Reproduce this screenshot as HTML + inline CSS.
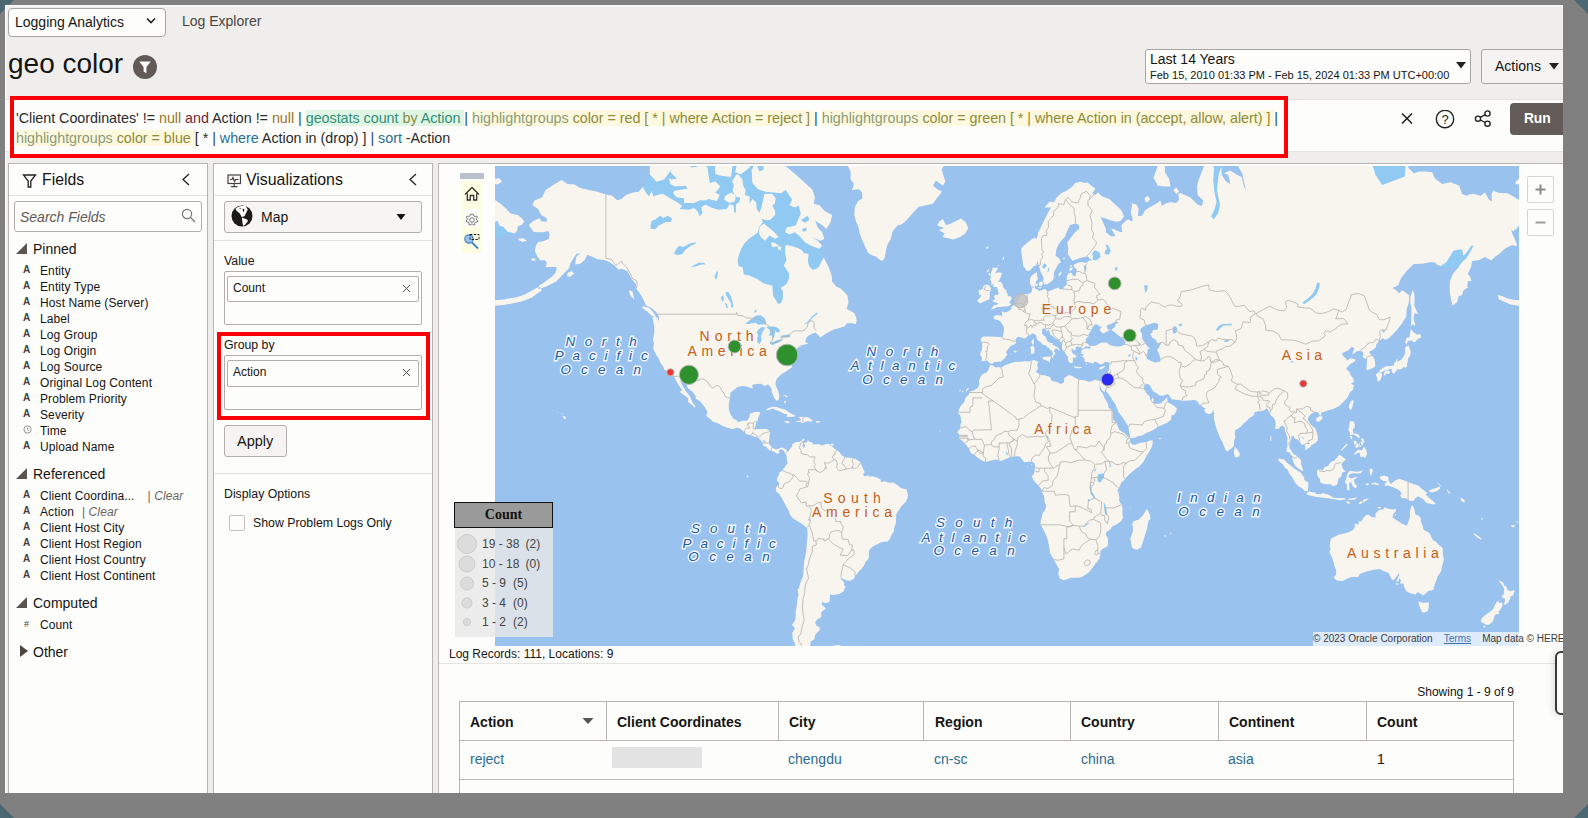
<!DOCTYPE html>
<html><head><meta charset="utf-8">
<style>
*{box-sizing:border-box;margin:0;padding:0}
html,body{width:1588px;height:818px;overflow:hidden;background:#808080;font-family:"Liberation Sans",sans-serif;color:#161513}
.abs{position:absolute}
#frame{position:absolute;left:5px;top:5px;width:1558px;height:788px;background:#efeeec;overflow:hidden;box-shadow:inset 1.5px 1.5px 0 #f9f9f7}
.corner{position:absolute;width:0;height:0}
.panel{position:absolute;background:#fdfdfb;border:1px solid #b9b4b0}
.hsep{position:absolute;height:1px;background:#e3e1de}
.box{position:absolute;border:1px solid #b3aeaa;border-radius:3px;background:#fdfdfb}
.t12{position:absolute;font-size:12px;line-height:14px;white-space:nowrap;color:#161513}
.fi{position:absolute;left:32px;font-size:12px;line-height:14px;white-space:nowrap;color:#161513;letter-spacing:0.1px}
.fa{position:absolute;left:15px;font-size:10px;line-height:14px;font-weight:bold;color:#47423e}
.sec{position:absolute;left:25px;font-size:14px;line-height:16px;color:#161513;white-space:nowrap}
.tri{position:absolute;left:8px;width:0;height:0;border-left:11px solid transparent;border-bottom:11px solid #5a544f}
.clr{font-style:italic;color:#6b6661}
.q{position:absolute;left:11px;font-size:14.33px;line-height:18px;white-space:nowrap;color:#2b2b2b;letter-spacing:-0.03px}
.q .n{color:#9a7428}.q .a{color:#7a1f33}.q .p{color:#26497a}.q .g{color:#2f8f78}.q .o{color:#8f8a3c}.q .h{color:#8d9b78}.q .w{color:#2a6f94}
.q .bg1{background:#e0f6e4}.q .bg2{background:#fcf9df}
th,td{font-size:14px}
</style></head><body>
<!-- teal corners -->
<svg class="abs" style="left:0;top:0" width="1588" height="818">
<polygon points="0,0 14,0 0,14" fill="#4b6772"/>
<polygon points="1574,0 1588,0 1588,14" fill="#4b6772"/>
<polygon points="0,804 14,818 0,818" fill="#4b6772"/>
<polygon points="1574,818 1588,804 1588,818" fill="#4b6772"/>
</svg>
<div id="frame">
<!-- top bar -->
<div class="box" style="left:3px;top:2.5px;width:158px;height:29px;border-radius:4px;border-color:#aaa5a0"></div>
<div class="abs" style="left:10px;top:8px;font-size:14px;line-height:18px;color:#161513">Logging Analytics</div>
<svg class="abs" style="left:141px;top:12px" width="10" height="8"><path d="M1 1.5 L5 5.5 L9 1.5" fill="none" stroke="#222" stroke-width="1.6"/></svg>
<div class="abs" style="left:177px;top:7px;font-size:14px;line-height:18px;color:#4a4541">Log Explorer</div>
<div class="abs" style="left:3px;top:42px;font-size:28px;line-height:34px;color:#161513">geo color</div>
<svg class="abs" style="left:127px;top:49px" width="26" height="26"><circle cx="13" cy="13" r="12" fill="#615a56"/><path d="M7.2 7.5 H18.8 L14.4 13 V19.3 L11.6 17.6 V13 Z" fill="#fff"/></svg>

<!-- time picker -->
<div class="box" style="left:1140px;top:44px;width:326px;height:35px;border-color:#aaa5a0"></div>
<div class="abs" style="left:1145px;top:46px;font-size:14px;line-height:16px;color:#161513">Last 14 Years</div>
<div class="abs" style="left:1145px;top:63px;font-size:11px;line-height:14px;color:#161513;white-space:nowrap">Feb 15, 2010 01:33 PM - Feb 15, 2024 01:33 PM UTC+00:00</div>
<svg class="abs" style="left:1451px;top:57px" width="10" height="7"><polygon points="0,0 10,0 5,6.5" fill="#222"/></svg>
<div class="box" style="left:1476px;top:44px;width:100px;height:35px;background:#f4f3f1;border-color:#aaa5a0"></div>
<div class="abs" style="left:1490px;top:52px;font-size:14px;line-height:18px;color:#161513">Actions</div>
<svg class="abs" style="left:1544px;top:58px" width="10" height="7"><polygon points="0,0 10,0 5,6.5" fill="#222"/></svg>

<!-- query bar -->
<div class="abs" style="left:0;top:94px;width:1558px;height:53px;background:#fdfdfb;border-top:1px solid #e4e2df;border-bottom:1px solid #e4e2df"></div>
<div class="abs" style="left:5px;top:91px;width:1278px;height:62px;border:4px solid #fb0007;background:#fdfdfb"></div>
<div class="q" style="top:104px">'Client Coordinates' != <span class="n">null</span> <span class="a">and</span> Action != <span class="n">null</span> <span class="p">|</span> <span class="bg1"><span class="g">geostats count</span> <span class="o">by</span> <span class="g">Action</span> </span><span class="p">|</span> <span class="bg2"><span class="h">highlightgroups</span> <span class="o">color = red [ * | where Action = reject ]</span> </span><span class="p">|</span> <span class="bg2"><span class="h">highlightgroups</span> <span class="o">color = green [ * | where Action in (accept, allow, alert) ]</span> </span><span class="p">|</span></div>
<div class="q" style="top:124px"><span class="bg2"><span class="h">highlightgroups</span> <span class="o">color = blue</span> </span>[ * <span class="p">|</span> <span class="w">where</span> Action in (drop) ] <span class="p">|</span> <span class="w">sort</span> -Action</div>
<svg class="abs" style="left:1394px;top:105px" width="100" height="20">
<path d="M3 3.5 L13 13.5 M13 3.5 L3 13.5" stroke="#222" stroke-width="1.6" fill="none"/>
<circle cx="46" cy="9" r="8.7" fill="none" stroke="#222" stroke-width="1.4"/>
<text x="46" y="13.6" font-size="13" text-anchor="middle" font-family="Liberation Sans" fill="#222">?</text>
<g fill="none" stroke="#222" stroke-width="1.4"><circle cx="79" cy="8.7" r="2.6"/><circle cx="88.5" cy="3.5" r="2.6"/><circle cx="88.5" cy="13.7" r="2.6"/><path d="M81.3 7.4 L86.2 4.7 M81.3 10 L86.2 12.5"/></g>
</svg>
<div class="abs" style="left:1505px;top:98px;width:70px;height:32px;background:#625b57;border-radius:4px"></div>
<div class="abs" style="left:1519px;top:105px;font-size:13.8px;line-height:18px;color:#fff;font-weight:bold;letter-spacing:-0.1px">Run</div>

<!-- between strip -->


<!-- FIELDS panel -->
<div class="panel" style="left:3px;top:158px;width:200px;height:640px"></div>
<div id="fields" class="abs" style="left:3px;top:158px;width:200px;height:640px">
<svg class="abs" style="left:14px;top:10px" width="16" height="16"><path d="M1.5 2 H13.5 L8.8 8 V14 L6.2 14 V8 Z" fill="none" stroke="#222" stroke-width="1.3" stroke-linejoin="miter"/></svg>
<div class="abs" style="left:34px;top:7px;font-size:15.8px;line-height:20px">Fields</div>
<svg class="abs" style="left:173px;top:10px" width="10" height="14"><path d="M8 1 L2 6.5 L8 12" fill="none" stroke="#222" stroke-width="1.3"/></svg>
<div class="hsep" style="left:1px;top:32px;width:198px"></div>
<div class="box" style="left:6px;top:38px;width:188px;height:31px"></div>
<div class="abs" style="left:12px;top:45px;font-size:14px;line-height:18px;font-style:italic;color:#5f5a56">Search Fields</div>
<svg class="abs" style="left:173px;top:45px" width="16" height="16"><circle cx="6" cy="6" r="4.6" fill="none" stroke="#777" stroke-width="1.2"/><path d="M9.4 9.4 L14 14" stroke="#777" stroke-width="1.3"/></svg>

<div class="tri" style="top:80px"></div><div class="sec" style="top:78px">Pinned</div>
<div class="fa" style="top:100px">A</div><div class="fi" style="top:101px">Entity</div>
<div class="fa" style="top:116px">A</div><div class="fi" style="top:117px">Entity Type</div>
<div class="fa" style="top:132px">A</div><div class="fi" style="top:133px">Host Name (Server)</div>
<div class="fa" style="top:148px">A</div><div class="fi" style="top:149px">Label</div>
<div class="fa" style="top:164px">A</div><div class="fi" style="top:165px">Log Group</div>
<div class="fa" style="top:180px">A</div><div class="fi" style="top:181px">Log Origin</div>
<div class="fa" style="top:196px">A</div><div class="fi" style="top:197px">Log Source</div>
<div class="fa" style="top:212px">A</div><div class="fi" style="top:213px">Original Log Content</div>
<div class="fa" style="top:228px">A</div><div class="fi" style="top:229px">Problem Priority</div>
<div class="fa" style="top:244px">A</div><div class="fi" style="top:245px">Severity</div>
<svg class="abs" style="left:15px;top:262px" width="9" height="9"><circle cx="4.5" cy="4.5" r="3.6" fill="none" stroke="#8a8581" stroke-width="0.9"/><path d="M4.5 2.5 V4.7 L5.8 5.6" fill="none" stroke="#8a8581" stroke-width="0.8"/></svg><div class="fi" style="top:261px">Time</div>
<div class="fa" style="top:276px">A</div><div class="fi" style="top:277px">Upload Name</div>

<div class="tri" style="top:305px"></div><div class="sec" style="top:303px">Referenced</div>
<div class="fa" style="top:325px">A</div><div class="fi" style="top:326px">Client Coordina...<span class="clr" style="margin-left:13px"><span style="font-style:normal">|</span> Clear</span></div>
<div class="fa" style="top:341px">A</div><div class="fi" style="top:342px">Action<span class="clr" style="margin-left:8px"><span style="font-style:normal">|</span> Clear</span></div>
<div class="fa" style="top:357px">A</div><div class="fi" style="top:358px">Client Host City</div>
<div class="fa" style="top:373px">A</div><div class="fi" style="top:374px">Client Host Region</div>
<div class="fa" style="top:389px">A</div><div class="fi" style="top:390px">Client Host Country</div>
<div class="fa" style="top:405px">A</div><div class="fi" style="top:406px">Client Host Continent</div>

<div class="tri" style="top:434px"></div><div class="sec" style="top:432px">Computed</div>
<div class="fa" style="top:454px;font-weight:normal;font-size:9px;left:16px">#</div><div class="fi" style="top:455px">Count</div>
<div class="abs" style="left:12px;top:482px;width:0;height:0;border-top:6.5px solid transparent;border-bottom:6.5px solid transparent;border-left:8px solid #4a4541"></div><div class="sec" style="top:481px">Other</div>
</div>

<!-- VISUALIZATIONS panel -->
<div class="panel" style="left:208px;top:158px;width:220px;height:640px"></div>
<div id="viz" class="abs" style="left:208px;top:158px;width:220px;height:640px">
<svg class="abs" style="left:14px;top:11px" width="16" height="15" fill="none" stroke="#47423e" stroke-width="1.2"><rect x="1" y="1" width="12.5" height="8.5"/><path d="M3 5.5 H5 L6 3.5 L7.5 7.5 L8.5 5.5 H11.5 M7.2 9.5 V12.5 M4 12.7 H10.5"/></svg>
<div class="abs" style="left:33px;top:7px;font-size:15.9px;line-height:20px">Visualizations</div>
<svg class="abs" style="left:195px;top:10px" width="10" height="14"><path d="M8 1 L2 6.5 L8 12" fill="none" stroke="#222" stroke-width="1.3"/></svg>
<div class="hsep" style="left:1px;top:32px;width:218px"></div>
<div class="box" style="left:11px;top:38px;width:198px;height:32px;background:#f6f5f3"></div>
<svg class="abs" style="left:17.5px;top:42.4px" width="22" height="22"><circle cx="11" cy="11" r="10.5" fill="#1b1a18"/><path d="M6.4 2.3 L10 1 L14.6 1.1 L16.8 4.6 L15 8.3 L13.4 11.3 L10.7 11.9 L8.8 8.6 L5.8 6 L4.3 4.1 Z" fill="#fdfdfb"/><path d="M11.6 3.6 L13.3 4.2 L13 6.9 L11.9 6.2 Z M8.5 3 L10 3.5 L9.2 4.6Z" fill="#1b1a18"/><path d="M10.9 12.4 L16.1 14.4 L17 16.1 L14.1 19.7 L12.2 21 L11.4 17.6 Z" fill="#fdfdfb"/></svg>
<div class="abs" style="left:48px;top:45px;font-size:14px;line-height:18px;color:#161513">Map</div>
<svg class="abs" style="left:182.5px;top:51px" width="10" height="7"><polygon points="0.5,0 9.5,0 5,6" fill="#111"/></svg>
<div class="hsep" style="left:1px;top:77px;width:218px"></div>
<div class="t12" style="left:11px;top:91px;font-size:12.3px">Value</div>
<div class="box" style="left:11px;top:108px;width:198px;height:54px;border-radius:2px"></div>
<div class="box" style="left:14px;top:113px;width:192px;height:26px;border-radius:2px"></div>
<div class="t12" style="left:20px;top:118px">Count</div>
<svg class="abs" style="left:189px;top:121px" width="9" height="9"><path d="M1 1 L8 8 M8 1 L1 8" stroke="#444" stroke-width="0.95"/></svg>

<div class="abs" style="left:4px;top:169px;width:213px;height:88px;border:4px solid #fb0007"></div>
<div class="t12" style="left:11px;top:175px;font-size:12.3px">Group by</div>
<div class="box" style="left:11px;top:192px;width:198px;height:55px;border-radius:2px"></div>
<div class="box" style="left:14px;top:197px;width:192px;height:27px;border-radius:2px"></div>
<div class="t12" style="left:20px;top:202px">Action</div>
<svg class="abs" style="left:189px;top:205px" width="9" height="9"><path d="M1 1 L8 8 M8 1 L1 8" stroke="#444" stroke-width="0.95"/></svg>

<div class="box" style="left:11px;top:262px;width:63px;height:32px;background:#f5f4f2;border-radius:3px"></div>
<div class="abs" style="left:24px;top:269px;font-size:14.5px;line-height:18px">Apply</div>
<div class="hsep" style="left:1px;top:310px;width:218px"></div>
<div class="t12" style="left:11px;top:324px;font-size:12.3px">Display Options</div>
<div class="box" style="left:16px;top:352px;width:16px;height:16px;border-radius:2px;border-color:#c4c0bc"></div>
<div class="t12" style="left:40px;top:353px;font-size:12.3px">Show Problem Logs Only</div>
</div>

<!-- MAP panel -->
<div class="panel" style="left:433px;top:158px;width:1140px;height:640px"></div>
<div id="mapwrap" class="abs" style="left:490px;top:161px;width:1024px;height:480px;background:#99c2ee;overflow:hidden">
<!--MAPSVG--><svg class="abs" style="left:0;top:0" width="1024" height="480" viewBox="0 0 1024 480">
<path fill="#90c9f2" d="M147.9 21 L154.7 8.2 L155 -3.2 L157.9 -27.5 L284.4 -27.5 L284.4 -6.2 L298.7 12.7 L310 29.8 L318.6 49 L315.7 63 L321.4 79.1 L325.4 81.5 L328.8 91.6 L324.3 110.2 L307.2 125.3 L293 139.3 L281.6 141.6 L274.5 132.4 L261.7 122.9 L241.8 110.2 L236.1 93.9 L236.1 72.8 L250.3 59.6 L250.3 49 L227.6 50.4 L207.6 54 L190.6 47.5 L176.4 39.3 L162.1 35.4 L150.8 31.4 L146.5 24 Z M715.4 0.2 L727.9 0.2 L727.9 56.1 L715.4 56.1 Z M0 56.1 L17.6 56.1 L17.6 67.6 L0 72.2 Z M944.5 101.3 L949.7 86.8 L961.8 79.1 L982.7 78.1 L982.7 90.9 L972.3 101.3 Z"/>
<path fill="#f8f4ee" d="M33.8 58.9 L38.4 54.7 L44.7 52.2 L46.4 55.4 L52.1 55.4 L51.5 51.9 L46.1 49 L43.8 43.8 L37.5 38.9 L39.3 34.6 L46.9 31.4 L50.6 24 L58.3 18.9 L66.6 14.1 L72.5 18 L79.6 18.5 L85.3 21.9 L93.9 24 L102.4 25.7 L110.9 28.6 L116.6 29.4 L122.3 34.2 L126.6 33 L130.8 29 L138 26.5 L143.6 25.7 L147.9 21 L150.8 26.5 L154.2 30.6 L156.7 24.8 L158.4 30.6 L162.1 29 L167.8 27.7 L176.4 33 L183.5 36.9 L187.2 40 L184.6 43.1 L193.4 43.8 L199.1 41.9 L202.5 45.3 L204.8 50.4 L207.6 46.8 L206.2 41.6 L210.5 38.5 L216.2 41.6 L223.3 43.8 L231.8 43.1 L234.7 37.7 L238.9 40 L238.9 46.1 L240.9 46.8 L240.9 38.5 L244.6 35.4 L245.2 31.4 L240.4 30.6 L237.5 24.8 L238.9 19.7 L237.2 15.4 L240.9 9.1 L243.2 8.2 L247.5 13.6 L248 18.9 L250.9 24.8 L249.7 29 L254.6 30.6 L254.6 37.7 L257.4 33 L261.1 36.2 L261.7 43.1 L264.5 46.8 L266.2 42.3 L268.2 33.8 L269.4 27.7 L277.3 28.1 L280.7 32.2 L279.9 37.7 L277.3 39.3 L280.2 45.3 L280.2 49 L274.8 54 L270.2 54 L266.5 52.6 L267.9 56.1 L264 61 L263.1 66.3 L258.8 69.6 L254 72.8 L249.5 77.2 L246 83.3 L243.8 89.3 L242.6 93.9 L243.8 100.6 L247.5 101.1 L248.9 108.6 L253.7 109.2 L261.7 112.8 L268.8 117.4 L277.3 119.4 L278.2 130.1 L280.7 133.8 L283 138 L285.9 137 L287.9 132.4 L287.9 125.3 L285.6 121.9 L291.6 117.9 L293.8 112.8 L294.1 107.6 L290.7 102.2 L288.7 99.5 L291.6 93.9 L290.1 88.1 L290.1 80.3 L291.8 78.8 L297.2 80.3 L302.9 82.1 L307.2 84.5 L308.6 86.9 L313.7 88.1 L312.9 95 L314.3 100.6 L317.7 103.8 L321.4 102.8 L324.3 100.6 L325.7 96.7 L328.8 91.6 L331.4 96.7 L334.2 102.2 L336.8 110.2 L337.1 115.4 L341.3 120.4 L345.6 122.4 L348.4 125.3 L352.4 129.6 L353.6 136.1 L351.6 142.9 L354.1 144.2 L359.3 146.9 L361.2 151.2 L361.8 155 L360.4 158.3 L357 157.1 L351.6 157.5 L349.6 160.4 L344.2 162 L338.8 163.6 L331.1 167.5 L325.1 171.4 L323.4 169.2 L321.1 167.3 L320.9 166.5 L317.2 167.7 L312.9 170 L310.9 172.8 L311.2 174.3 L310 175.5 L311.2 177 L312.9 176.4 L312.9 177.8 L309.5 178.5 L305.8 179.5 L302.6 180.6 L307.2 180.2 L301.8 181.9 L301.5 184.2 L300.1 186.8 L299 188.2 L297.2 186.4 L298.4 188.9 L298.1 191.5 L296.1 194.5 L295.3 190.8 L294.7 186.8 L294.4 191.5 L295 195.1 L295.8 195.4 L297.2 201.1 L294.4 203.1 L290.4 205.9 L287.3 207.6 L284.4 210.3 L281.6 213 L280.5 217 L280.7 219.6 L282.7 223.9 L284.3 229.3 L284 232.8 L283 234.4 L281.3 234.5 L279.3 231.9 L278.2 229.3 L276.5 226.1 L276.8 222.9 L274.5 220 L273.1 218.6 L269.4 220 L266 217.7 L261.7 218 L257.7 218.6 L257.1 220.3 L258.3 222.2 L255.4 221.9 L251.7 220.6 L247.5 220 L242.6 220.9 L238.9 223.9 L235.5 226.4 L235 231.9 L233.8 238.1 L233.8 243.4 L235.2 247.4 L238.1 252.5 L241.8 254.6 L243.5 256 L248.9 254.6 L251.7 254.9 L254 251.9 L254.6 250.9 L254.9 247.4 L260.3 245.9 L264.5 245.9 L265.1 247.4 L263.1 251.9 L262.5 255.5 L261.1 254.9 L261.1 257.9 L260 261.5 L259.1 262.7 L261.7 263.3 L267.4 263 L271.6 263 L275.3 265.3 L274.5 269.7 L274.2 274.1 L273.6 277 L275.9 279.9 L278.2 282.5 L281.6 283.4 L284.7 281.9 L287.3 281.4 L291.6 283.7 L292.1 284.2 L293.5 286 L291.8 287.7 L290.4 288 L289.6 286.8 L289 284.8 L285.9 283.1 L283.6 284.8 L284.4 287.1 L281.6 287.7 L279.6 285.7 L276.2 285.1 L274.2 284.2 L271.1 280.8 L267.9 279.9 L268.2 277.3 L266 274.7 L263.1 271.5 L259.4 270.6 L256 269.2 L251.7 268.3 L249.5 266.5 L245.2 262.4 L242.3 261.8 L241.2 261.9 L237.5 263.3 L231.8 261.5 L227.8 260 L222.7 257.3 L217.6 255.5 L215.3 253.1 L211.9 250.4 L211.3 249.2 L212.5 245.9 L209.4 240.6 L204.8 235 L200.8 232.8 L200.5 229.6 L197.4 225.8 L192.9 222.2 L190.6 215.7 L185.5 213 L185.7 215.7 L187.7 220 L191.1 225.5 L194.8 230.3 L197.1 235.6 L198.3 237.5 L200.7 240.6 L199.4 241.6 L198.3 239.7 L193.4 236.3 L192.9 231.9 L189.2 229.3 L185.5 226.4 L184.6 226 L187.2 223.9 L183.5 219 L180.3 213 L178.9 210.7 L178.3 209 L175.2 206.2 L172.9 204.9 L169.2 203.8 L168.7 201.4 L165.3 196.5 L163.6 192.2 L162.1 190.4 L159.9 186 L158.2 182.7 L159 177.4 L157.9 173.5 L159.3 166.9 L159.3 160 L157.3 150.8 L162.1 151.6 L163.8 155 L164.1 151.2 L162.7 148.2 L160.7 145.5 L156.4 142 L150.8 139.3 L148.5 133.8 L145.1 127.7 L141.4 122.9 L140.8 117.9 L136.5 112.8 L132.3 104.9 L126.6 102.8 L123.7 103.8 L119.5 99.5 L114.3 96.1 L109.5 93.9 L102.4 93.3 L96.7 90.4 L92.4 88.7 L89.6 93.9 L85.3 97.8 L80.2 98.4 L81.1 91 L85.3 86.9 L81.1 88.1 L78.2 92.7 L75.4 97.3 L74 102.2 L69.7 106.5 L65.4 111.3 L61.2 115.4 L55.5 118.4 L51.2 120.4 L46.9 121.9 L43.2 122.9 L44.1 119.4 L48.4 116.9 L52.6 113.8 L56.9 110.7 L60.3 107.1 L61.7 103.3 L61.2 101.1 L56.9 101.1 L51.8 101.1 L50.6 101.7 L51.8 96.7 L49.8 93.9 L45.5 94.4 L42.7 91 L39.8 85.1 L41.2 79.1 L43.2 76 L48.4 75.3 L54 72.8 L54.6 68.3 L53.2 65 L48.4 66.3 L41.5 66.3 L38.4 65.7 L33.8 58.9 Z M290.4 288 L292.1 284.2 L293.5 285.7 L295 282.8 L297 281.1 L297.2 278.5 L299.2 277 L300.9 276.1 L304.4 275.9 L306.6 274.4 L308.2 272.8 L309.5 273.2 L309.2 274.7 L307.5 276.4 L308.3 277.3 L307.2 279.9 L308.9 281.9 L310 279.9 L308.9 277.3 L312.3 275.9 L312.9 273.5 L313.7 275.6 L317.2 276.4 L318 278.2 L321.4 278.2 L324.3 278.2 L327.1 279.6 L329.1 278.8 L332.8 277.9 L335.9 277.9 L334.2 279.3 L337.1 280.5 L339.1 282.2 L341.3 284.2 L344.2 285.7 L346.5 289.1 L349.9 291.4 L355 291.7 L358.4 292.3 L362.7 294.3 L365.2 296.3 L366.9 300 L368.4 303.4 L369.8 306.2 L368.1 308.2 L368.9 310.2 L374 309.4 L374.6 311.1 L376.9 310.2 L381.2 311.3 L385.4 313.3 L386 316.2 L389.7 315.3 L394 316.8 L398.2 316.5 L402.5 319 L405.9 321.9 L409.6 323 L411.6 323.3 L412.4 327 L413 328.7 L412.7 331.6 L411 335.6 L408.2 338.5 L406.5 340 L403.9 344.3 L402.5 345.8 L401.1 348.7 L401.1 353.1 L400.8 357.6 L399.1 362.1 L398.8 365.4 L397.4 367.5 L395.4 371.1 L395.4 372.7 L392.5 375.6 L389.1 375.8 L385.4 376.4 L382.6 378.2 L380.3 378.9 L376 382 L374 384.5 L373.8 388.3 L374 390.2 L373.2 393.5 L370.6 395.7 L368.9 399.7 L366.4 403 L363.8 405.3 L360.1 410.4 L358.4 413.2 L355.6 414.7 L352.1 414.5 L347.6 412.8 L345.9 411.4 L345.6 412.8 L349.3 416.6 L349 419.4 L350.7 420.2 L348.4 425.5 L344.2 428.1 L338.5 429.1 L335.1 428.4 L334.8 432.8 L334.8 435.8 L330.5 437.3 L327.1 435.8 L326.8 438.5 L330 441.5 L331.1 442.7 L328.5 444.2 L326.3 446.2 L326.3 451.3 L322.8 452.9 L320 456.2 L321.4 459.5 L324.6 461.2 L324.8 464.1 L320 468.8 L319.4 473.2 L315.7 475.4 L315.2 480.4 L317.4 483.9 L314.3 489.3 L302.9 489.3 L300.1 482.3 L300.1 477.7 L297.8 473.2 L297.2 466.7 L300.1 462.4 L297 459.1 L300.1 454.2 L300.7 450.1 L300.7 445.4 L301.8 439.6 L302.4 432.8 L303.5 429.1 L302.6 423.7 L303.8 421.9 L305.5 416.6 L308.1 409.7 L308.3 408 L308.6 403 L308.9 398 L309.2 394.8 L310.3 389.9 L311.2 385.1 L311.5 382 L311.8 377.3 L312.3 372.7 L312.6 367.2 L312 362.1 L309.2 359.7 L305.8 357 L301.5 354.6 L298.1 352.5 L295.3 349.3 L295 348.4 L293.5 344.3 L292.6 343 L290.7 339.4 L288.7 335.6 L285.9 330.8 L284.4 327.9 L281.3 325.6 L280.7 321.9 L282.2 319.9 L283.6 318.2 L284.7 315.6 L283.6 316.2 L281.9 314.8 L282.5 311.3 L284.2 308.5 L284.4 306.2 L287.3 305.1 L287.9 303.4 L290.1 301.1 L291.6 298.5 L292.7 297.4 L291.6 292.8 L291.8 290 L290.4 288 Z M352.7 -16.5 L351.3 -3.2 L355.6 5.4 L355.6 13.6 L359 18 L357 24 L364.1 23.2 L366.9 26.5 L367.5 32.2 L362.7 35.4 L359.8 41.6 L359.3 49 L361.2 56.1 L363.5 61.6 L364.9 68.3 L367.5 74.7 L370.3 80.9 L373.2 86.9 L376.9 89.3 L381.2 90.4 L384 93.3 L387.1 95 L389.7 92.2 L390.8 85.1 L392.5 78.5 L395.9 72.8 L397.4 65.7 L402.5 59.6 L406.8 58.2 L411 54.7 L416.7 48.3 L423.8 40.8 L430.9 39.3 L438 37.7 L442.3 31.4 L447.1 25.7 L442.3 23.2 L438 19.7 L440.9 14.5 L448 19.7 L450.3 15.4 L448 8.2 L446.6 3.5 L449.4 -1.3 L452.3 -16.5 Z M442.3 59.6 L444.3 55.4 L448 53 L450.8 58.9 L454.3 58.2 L460.2 55.4 L465.9 52.6 L470.5 56.1 L473.3 62.3 L470.2 67.6 L465.1 70.9 L458.5 73.4 L454.3 72.5 L447.4 70.9 L449.7 67.6 L443.7 64 L449.4 62.3 L442.3 59.6 Z M154.7 8.2 L161.6 15.8 L169.2 13.6 L174.9 5.4 L180.6 -2.3 L177.8 -14.4 L159.3 -15.5 L155 -3.2 Z M173.5 11.8 L175.5 18 L179.8 20.6 L190.6 19.7 L192.6 22.7 L179.2 24.8 L178.3 27.7 L182 31.4 L188.9 32.2 L189.2 36.9 L199.1 36.9 L204.8 34.2 L210.5 34.6 L213.3 33 L221.9 35 L224.7 29 L220.4 26.5 L225.3 20.6 L220.4 15.4 L214.8 17.1 L212.5 1.6 L206.2 -4.2 L202 0.7 L196.3 1.6 L193.4 -1.3 L186.3 -5.2 L177.8 -0.3 L175.5 6.3 L182 12.7 L176.4 13.6 Z M229 33.8 L234.7 36.9 L239.8 35.4 L240.9 29.8 L236.1 26.5 L230.4 29.8 Z M220.4 8.2 L227.6 10 L236.1 10.9 L237.5 -1.3 L233.2 -13.4 L224.7 -11.3 L219.9 -1.3 Z M240.1 6.3 L246 8.2 L254.6 1.6 L256 -15.5 L240.4 -15.5 L241.8 -1.3 Z M256.6 4.5 L257.4 17.1 L263.1 23.2 L270.2 25.7 L278.8 26.5 L285.9 27.3 L290.7 24 L297.2 33.8 L294.4 39.3 L300.1 41.6 L303.5 39.3 L305.8 47.5 L302.9 54 L300.7 59.6 L291.6 61.6 L290.1 66.3 L294.4 68.3 L300.1 66.3 L305.8 71.5 L310 76.6 L317.2 80.3 L324.3 82.7 L327.1 79.7 L322.8 74.7 L317.2 71.5 L325.7 74.7 L329.4 72.8 L327.1 66.3 L322.8 61.6 L320 54.7 L327.1 58.9 L331.4 63 L335.6 56.1 L337.1 49 L330 45.3 L324.3 39.3 L318.6 37.7 L320 31.4 L317.2 23.2 L310 17.1 L304.4 11.8 L297.2 5.4 L290.1 -0.3 L283 -7.2 L273.1 -9.2 L267.4 -6.2 L268.8 3.5 L264.5 5.4 L260.3 -4.2 L256.6 4.5 Z M264.5 61 L268.8 57.5 L273.1 61 L278.8 65.7 L283.6 70.9 L280.2 72.8 L274.5 69.6 L270.2 74.7 L266 71.5 L264 67.6 Z M275.9 76.6 L279.3 76.6 L284.4 80.3 L277.3 80.9 Z M283 80.3 L286.7 80.9 L285.3 84.5 L283 83.3 Z M146.8 140.2 L153.6 141.6 L157.3 145.1 L160.7 149.9 L160.7 151.2 L156.4 149.5 L152.2 145.5 L147.9 142.5 Z M133.7 124.3 L137.4 125.3 L139.4 133.8 L135.1 129.1 Z M72.5 107.1 L76.8 104.9 L79.1 107.6 L75.4 110.7 L72.2 110.2 Z M44.1 120.4 L39.8 122.9 L35.6 125.3 L31.3 127.7 L25.6 130.1 L19.9 131.5 L14.2 132.4 L8.5 133.4 L0 134.3 L0 139.8 L8.5 138.9 L17.1 137.5 L25.6 135.7 L31.3 133.8 L37 131.5 L41.2 128.2 L46.9 124.3 Z M1002.7 129.1 L1006.9 130.1 L1012.6 132.4 L1018.3 133.8 L1024 134.3 L1024 139.8 L1015.5 138.4 L1004.1 133.4 Z M35.8 92.7 L39.8 92.2 L40.7 94.4 L37.5 95 Z M23.3 72.8 L28.4 72.2 L31.9 74.7 L27.6 76 L23.6 74.1 Z M270.5 244.6 L273.1 242.2 L277.3 240.8 L281.6 240.9 L285.9 242.5 L290.1 243.4 L294.4 246.5 L297.2 248.3 L300.9 249.7 L298.7 250.7 L291.6 250.9 L292.4 248.6 L288.7 247.4 L284.4 245.2 L280.2 243.7 L277.3 242.5 L274.5 243.7 L270.5 244.6 Z M300.2 255.4 L303.2 255.7 L304.9 255.8 L308.1 257.2 L310 255.7 L312.9 255.2 L316.6 255.8 L317.6 254.6 L315.2 252.8 L312.9 251.2 L308.1 250.9 L304.9 250.7 L303.2 251.3 L305.2 252.5 L306.1 254.6 L302.9 254.8 L300.2 255.4 Z M289.1 255.5 L293 255.1 L295.3 256.4 L293 257.2 L289.3 256.1 Z M320.9 255.1 L325.1 255.2 L324.8 256.4 L320.9 256.6 Z M335.9 277.9 L338.6 277.6 L338.5 279.6 L335.9 279.8 Z M289.3 235.3 L291 234.7 L290.7 237.5 L289.3 237.2 Z M287.6 229.6 L290.7 229.3 L292.7 230.3 L292.1 231.6 L289.6 230.1 Z M338.5 479.5 L344.2 479 L347.6 480.4 L344.2 483.6 L339.1 482.7 Z M251.7 309.4 L253.4 309.6 L253.2 311.3 L251.7 311.1 Z M68.3 249.8 L71.1 251.3 L69.4 253.6 L68.3 251.6 Z M66.3 247.5 L68.3 248 L67.1 248.6 Z M61.9 245.7 L63.4 246 L62.6 246.5 Z M57.6 244 L58.7 243.9 L58.5 244.6 Z M495.2 199.3 L496.9 199 L500.6 201.4 L503.5 201.1 L506.3 201.8 L509.2 199.7 L513.4 197.9 L517.7 196.5 L520.7 195.8 L526.2 195.8 L530.5 195.1 L533.9 195.4 L537.6 194.4 L540 194 L541.3 195.4 L543.6 195.1 L542.2 198.6 L542.4 200.4 L543.3 202.1 L541.9 204.2 L540.7 205.9 L543.3 207.3 L543.9 208.3 L547.6 209.3 L549.5 209.3 L555.2 211 L556.4 214.7 L561.8 216 L566 218 L568.9 216.3 L569.2 212 L573.2 209.3 L576.3 209.6 L580.3 212 L583.7 213.7 L589.4 214.3 L594.5 216 L597 215 L600.2 213.8 L603.9 214.7 L604.6 219.1 L605 223.9 L607.9 227.7 L609.6 231.9 L611.3 235 L613 238.1 L613.3 241.2 L617 244.3 L617.8 247.4 L617.8 251.6 L618.4 254 L621.5 256.4 L623.5 262.4 L624.2 263.6 L626.3 265.3 L629.2 266.8 L632.6 270.6 L634.9 272.4 L634.7 275.3 L633.5 275.4 L635.2 275.9 L637.2 278.6 L640 278.8 L645.7 276.7 L651.4 276.1 L656.5 274.3 L657.9 274.6 L657.4 278.8 L656.5 281.4 L654.2 285.7 L651.4 290 L648.5 295.7 L644.3 300.5 L641 302.7 L637.2 305.7 L632.9 309.6 L630 313.3 L628.3 315 L626.3 316.5 L624.9 320 L623.5 322.7 L622.4 325.6 L623.8 327.9 L624.4 331.3 L624.1 334.2 L625.2 337.1 L627.1 338.5 L627.5 342.9 L627.5 348.7 L628.1 351.7 L625.8 355.5 L621.5 358.5 L617.2 360.6 L615.3 363.3 L611.6 366 L610.7 368.7 L612.4 371.1 L613 373.3 L613 378.2 L612.4 380.4 L607.3 382.9 L605.3 385 L605.6 388.3 L604.2 393.1 L601.6 396.4 L600.3 397.7 L597.9 401.3 L594.5 405.7 L591.4 408 L587.4 410.8 L584.8 411.4 L580.3 411.8 L576 411.8 L568.9 414.2 L564.6 412.6 L564.3 411.1 L563.2 407.4 L564.1 403 L561.2 398 L558.8 393.5 L556.1 389.3 L555 387 L554.4 382 L553.2 375.4 L551.3 369.6 L548.4 363.6 L545.6 358.5 L545.6 354.6 L546.7 352 L547.6 347.3 L550.1 344 L551.3 340 L549.5 335.6 L549.5 333.6 L549 329.9 L547 325.9 L546.7 324.2 L545.6 322.2 L543.3 319.3 L540.4 316.5 L538.5 313.9 L536.7 310.5 L538.5 308.5 L538.9 307.4 L539.3 305.4 L539.9 302 L540.2 300 L539.6 297.5 L537.3 295.7 L535.6 295.5 L531.9 296 L529.1 296.3 L526.2 292.3 L524.5 290.5 L521.7 290.3 L518.8 290.4 L515.4 291.1 L511.4 292.7 L506 295 L503.5 294 L500.6 293.5 L494.9 294.8 L490.7 296.1 L486.4 294.3 L481.3 290.5 L479.3 288.8 L476.4 287.4 L474.5 284.2 L474.2 282.2 L473 281.4 L470.8 278.5 L469.3 277 L467.3 274.7 L464.5 273 L464.2 270 L464.2 268.3 L462.2 266.1 L464.2 263.9 L465.1 262.4 L465.6 257.9 L466.5 256.1 L465.9 252.5 L465.1 248.9 L463.5 248 L463.6 245.9 L463.9 243.7 L465.9 239.7 L466.8 238.8 L469.3 236 L469.9 233.4 L470.8 231.6 L473.6 228.7 L474.5 226.4 L475.3 225.6 L479.3 224.2 L482.1 222.2 L483.3 220.9 L484.4 218 L484 215.7 L484.1 214 L485.5 210.7 L487.8 207.9 L490.4 206.9 L492.7 205.6 L494.1 202.1 L495.2 199.3 Z M652.2 342.9 L654.8 348.7 L655.6 352.8 L653.7 354.6 L652.5 359.1 L652.5 361.2 L650.8 366.6 L649.4 371.1 L648 375.8 L645.7 382 L641.4 383.7 L637.2 382 L636 377 L635.2 372.7 L636.9 368.1 L638 365.1 L637.7 360.6 L637.2 357.6 L638.6 355.2 L641.4 354.3 L643.7 353.7 L646.3 351.1 L648.2 348.7 L649.4 347 L650.8 344.3 L652.2 342.9 Z M663.6 272.1 L667 272.5 L665.6 273.2 L663.9 273 Z M463.9 224.4 L466.2 223.7 L465.1 225.5 Z M467.1 225.2 L468.2 225 L468.2 226.3 L467.1 226.1 Z M471.6 223.2 L473.6 221.6 L473.9 222.6 L472.2 224.8 L470.8 225.2 Z M444.3 264.5 L445.4 264.5 L445.4 265.6 L444.3 265.6 Z M669 369.3 L670.7 369.3 L670.7 370.8 L669.3 370.5 Z M675 366.6 L676.4 366.9 L676.1 368.1 L675 367.8 Z M634.9 341.1 L635.7 341.7 L635.2 342.7 Z M623.5 324.7 L624.5 325.9 L623.8 327 Z M536.2 297.8 L537.5 298.3 L536.5 299.4 Z M496.8 198.1 L494.1 196.8 L492.4 194.4 L489.2 195.1 L486.5 195.1 L487 191.5 L485 188.8 L485.5 186.4 L487 183.4 L487.3 179.7 L486.7 176.2 L485.5 172.8 L488.4 170.4 L492.1 170.4 L495.8 170.4 L501.2 170.8 L506.9 171.2 L507.7 170.8 L508.6 166.5 L508.9 162.4 L508.6 160.4 L505.7 155.8 L503.5 154.2 L499.5 153.3 L498.3 150.8 L502 149 L506.3 149.7 L507.4 149.7 L506.6 145.1 L508.6 146.6 L512.3 146 L516.3 143.3 L516.6 140.4 L519.1 138.9 L522 137.5 L523.4 134.7 L525.4 130.1 L527.6 128.6 L531.9 128.2 L535.3 127.2 L536.5 125.8 L537.3 123.3 L536.5 120.4 L535 117.6 L535 112.8 L536.5 109.7 L540.2 107.1 L542.2 106.3 L541.9 109.2 L543 113.3 L541 115.4 L539.9 118.9 L539.6 121.4 L541 123.3 L543.3 123.3 L543 125.3 L546.4 124.3 L550.4 122.9 L552.7 125.8 L557.5 123.8 L563.2 121.4 L564.9 123.3 L568.3 123.3 L568.9 120.9 L571.7 118.9 L571.9 115.4 L571.7 111.3 L573.2 107.6 L576.3 106.5 L578 109.7 L580.6 110 L581.4 106 L581.7 103 L578.8 101.1 L578.8 98.4 L582.4 97 L586 96.1 L591.6 96.7 L594.5 94.4 L598.2 94.2 L594.5 92.7 L593.1 90.4 L588.8 91 L583.1 92.7 L577.4 94.7 L575.1 91.6 L572.9 88.1 L573.2 82.1 L572.3 76.6 L576 71.5 L580.3 65.7 L584.2 63 L584 58.9 L580.6 57.5 L575.1 58.9 L572.6 64.3 L569.7 70.9 L565.2 76 L562.9 79.7 L561.2 83.9 L560.6 89.8 L564.6 92.7 L565.8 96.7 L563.5 97.8 L561.8 101.1 L559.2 105.5 L558.6 111.8 L557.5 114.6 L552.7 117.9 L549 118.4 L548.8 117.4 L548.1 114.9 L548.7 111.8 L546 106.5 L543.9 100 L542.4 94.4 L541.3 99.5 L539 100 L534.8 104.4 L531.9 104.9 L528.2 100 L527.1 91.6 L526.2 85.1 L526.5 82.1 L529.6 79.1 L534.8 74.7 L539.3 71.5 L541.6 73.1 L543.3 66.3 L546.7 59.6 L549 54.7 L553 46.8 L556.1 41.6 L549.5 41.6 L554.7 35.4 L558.9 36.2 L561.8 31.4 L566 27.3 L571.7 24.8 L577.4 20.6 L580.3 17.1 L585.4 15.8 L590.2 17.1 L592.2 16.3 L596.5 19.7 L600.5 22.7 L597.3 27.3 L600.2 29 L603 26.5 L607.3 30.6 L614.4 33 L620.1 38.5 L625.8 43.4 L629.2 50.4 L625.8 54.7 L621.5 55.8 L614.4 54 L610.1 52.2 L605.9 51.2 L604.2 47.9 L607.3 54.7 L611 63 L611 66.3 L615.8 70.2 L620.4 70.2 L618.7 67 L616.1 62.3 L620.1 63.7 L625.2 66 L627.2 66 L626.3 59.6 L630 55.4 L632.9 53.3 L637.2 55.4 L637.7 52.6 L635.7 46.8 L637.2 37.7 L635.2 36.6 L641.4 38.5 L643.7 43.1 L642.8 50.1 L647.1 49.7 L650 44.6 L654.2 41.6 L661.3 37.7 L665.3 34.6 L667 40 L669.9 37.7 L675.6 36.2 L681.2 36.9 L684.1 33.8 L683.2 28.1 L685.5 26.9 L695.5 31.4 L696.9 33 L702.6 38.5 L706.8 40 L708.3 34.6 L702.6 29 L702 20.6 L703.4 14.5 L707.7 3.5 L709.7 -1.3 L715.4 -2.3 L719.1 1.6 L718.2 14.5 L719.4 25.7 L721.6 36.2 L719.6 43.1 L716.2 50.4 L718.5 53.3 L723.1 47.5 L725 38.5 L723.6 32.2 L721.9 23.2 L723.6 9.1 L726.2 0.7 L726.8 9.1 L731 15.4 L735.3 18 L733.3 9.1 L729 7.3 L735.3 4.5 L741 8.2 L746.7 10.9 L748.9 20.6 L750.9 24 L748.9 15.4 L747.5 8.2 L742.4 -1.3 L742.4 -21.9 L915.9 -21.9 L913.1 1.6 L918.8 7.3 L924.4 5.4 L930.1 5.4 L937.2 6.3 L940.1 12.7 L947.2 18 L955.7 16.3 L964.3 19.7 L967.1 28.1 L971.4 29.8 L974.2 28.6 L978.5 27.7 L985.6 29.8 L989.9 26.5 L994.1 33.8 L997 35.4 L996.4 28.1 L998.4 24.8 L1004.1 26.9 L1012.6 27.3 L1018.3 30.6 L1024 34 L1024 59.6 L1021.2 63 L1018.3 65 L1016.3 64.3 L1017.2 67.6 L1019.7 72.8 L1022 79.1 L1021.4 80.3 L1016.9 79.1 L1009.8 82.7 L1004.1 88.1 L999.8 91 L996.4 94.4 L989.9 91 L984.2 93.9 L981.3 94.4 L977.1 95 L976.2 100.6 L974.2 104.9 L972.8 107.6 L975.6 111.8 L976.5 114.9 L972.8 114.9 L972.2 120.4 L973.1 121.6 L968.5 124.3 L967.1 129.1 L963.4 130.5 L962.3 135.7 L957.7 139.8 L956.3 134.7 L954.6 125.3 L954.9 115.4 L958 107.6 L962.8 102.2 L966.5 96.7 L971.4 92.2 L975.1 86.3 L978.5 79.7 L976.2 79.7 L972.8 85.1 L968.5 89.8 L967.1 83.3 L958.6 84.5 L955.7 89.3 L951.5 96.1 L945.8 100 L941.5 98.6 L940.9 96.7 L935.8 96.1 L927.3 97.8 L918.8 98.1 L911.6 104.9 L906 112.3 L903.1 119.4 L897.4 121.9 L901.7 124.3 L903.7 127.2 L907.4 124.3 L911.6 127.2 L913.9 129.1 L914.2 133.8 L913.6 137 L911.6 143.8 L911.4 150.3 L908.8 154.6 L906 158.7 L901.1 164.9 L897.4 168.8 L893.2 172.8 L890.3 173.7 L887.5 172.2 L884.1 174.7 L883.8 175.5 L881.2 178.5 L880.9 181.2 L877.5 184.2 L874.7 185.3 L874.4 187.1 L877.2 189.7 L879.5 193.3 L880.4 198.6 L879.8 201.1 L876.1 202.8 L871.8 204.2 L871.3 202.8 L871.8 199.3 L871.8 195.8 L872.4 193.3 L869 192.2 L867.6 190.8 L868.4 188.9 L868.1 186.4 L865.8 184.7 L861.9 185.3 L857.3 188.6 L857.9 186 L859.6 182.3 L856.7 180.8 L853.3 184.2 L847.6 187.1 L846.8 188.2 L849.1 191.1 L851.1 192.6 L851.9 194.5 L855.6 192.2 L860.7 193.6 L859.6 195.4 L855.3 197.9 L851.6 202.1 L851.1 203.1 L854.2 205.6 L855.9 209.6 L858.7 213.3 L858.7 216 L855.9 217.7 L859 219.3 L857.9 223.9 L855.3 225.8 L852.2 231.9 L847.9 236.6 L843.9 240.3 L836.8 243.4 L834.8 243.7 L830 245.6 L826 246.8 L826.3 249.2 L824.6 249.5 L824 247.4 L822.3 245.9 L819.8 245.7 L816.4 247.7 L813.5 251 L812.9 253.4 L814.9 257.3 L817.8 260.6 L820.1 262.1 L822 266.8 L822.9 271.2 L822.6 274.7 L819.8 277.3 L816.6 278.9 L815.2 281.1 L811.5 283.4 L810 283.9 L810.4 280.5 L809.2 278.8 L806.4 278.2 L805 275.9 L802.7 273.5 L799.3 272.2 L799 270 L797.9 269.7 L796.4 270.3 L796.3 274.1 L795.3 276.4 L794.2 279 L794.5 282.2 L796.4 284.5 L798.2 288 L800.7 289 L802.7 290.8 L805.5 293.4 L806.3 296.5 L806.1 298.5 L807.3 301.4 L808.4 304.5 L806.4 304.8 L803.6 302.5 L800.4 300.2 L798.7 297.1 L797.4 293.1 L797.3 290.3 L795.6 288.8 L795 287.1 L792.7 285.7 L791.6 286 L791.6 282.8 L792.5 279.9 L792.2 275.6 L792.5 273 L791.3 268.3 L789.9 263.9 L789.6 260.9 L787.6 259.4 L785.6 260.6 L783.4 263 L780.2 262.7 L780.8 257.9 L779.9 254 L778 250.7 L776.2 250 L774.5 247.4 L773.7 245.9 L773.1 243.4 L771.4 242.5 L769.4 244.3 L765.7 245.2 L762.9 245.2 L759.5 246.5 L758.9 248.6 L758.6 249.8 L756.1 251 L753.8 252.5 L751.2 255.5 L748.9 257.3 L746.1 260.3 L743 262.7 L740.1 264.2 L739.8 267.4 L740.4 270.9 L739.1 274.4 L739.1 279 L737.3 281.9 L734.4 283.4 L732.6 285.4 L730.7 284.2 L728.9 280.1 L727.6 276.3 L724.9 271.5 L722.8 265.9 L721.9 263.9 L720.5 259.4 L719.1 253.6 L718.8 250.4 L719.1 247.1 L718.2 243.7 L717.1 246.8 L715.4 247.7 L713.7 248.3 L711.1 247.1 L708.8 243.7 L711.1 242.5 L708.3 241.6 L706.8 240.3 L706 239.1 L704 238.5 L703.1 236.3 L702.6 235.6 L701.4 234.4 L698.3 233.9 L695.5 234.4 L692.6 234.4 L689.2 234.7 L686.9 234.7 L684.1 234.1 L679.8 233.8 L676.4 233 L674.7 230.3 L673.6 228.7 L672.1 228.2 L668.4 229.6 L667 230.1 L664.2 229.3 L661.3 227.1 L658.5 225.8 L656.6 222.6 L654.8 219 L651.4 217.7 L650 219 L648.4 221.1 L649.7 223.9 L651.1 226.8 L653.4 229.3 L654.8 230.6 L655.1 233.4 L656.5 235.8 L656.6 233.4 L657.6 231.6 L658.8 234.1 L657.9 236.6 L658.8 237.8 L661.6 237.7 L664.2 237.8 L666.7 236.7 L669.3 234.2 L671.6 231.9 L672.3 230.8 L672.4 235 L673 236.6 L678.7 239.4 L682.1 242.8 L680.7 246.2 L679.3 248.6 L676.4 249.8 L676.1 253.4 L672.7 256.4 L669.3 257.9 L665.9 259.4 L663 260.5 L660.5 262.4 L657.1 264.7 L651.7 266.8 L647.1 269.4 L642.8 270.2 L640 271.8 L635.7 272.2 L635 270.3 L634.2 265.9 L633.5 261.5 L632.9 259.7 L630.3 255.8 L628.6 253.1 L626.1 249.5 L623.5 245.9 L621.5 241.2 L620.2 237.8 L617.8 234.4 L615.8 231.2 L613 227.4 L611.3 225.5 L611.6 220.6 L609.8 225.5 L609.4 226.3 L607.6 224.8 L606.4 223.5 L604.9 219.3 L604.2 214.8 L608.1 215.3 L609.6 214.7 L610.8 212.2 L611.6 209.6 L613 205.9 L614 204 L614.1 200.4 L614.8 196.5 L613.3 196.5 L610.4 195.8 L607.6 198.1 L604.4 198.3 L603 196.8 L599.3 195.6 L598.5 197.7 L594.8 196.5 L592.2 196.1 L589.9 196.1 L589.7 195.1 L589.4 192.6 L586.8 190.4 L588.2 189.9 L588.2 187.9 L586.2 186 L586.5 184.2 L588.8 182.7 L591.1 182.3 L594.5 182.7 L595.9 181.4 L594.6 180.4 L594.9 179.7 L598.8 179.9 L601.6 179.3 L604.4 177.4 L607.3 176.6 L611.6 176.4 L615.3 179.3 L618.7 180 L621.5 180.6 L624.9 180.4 L628.6 179.3 L630.3 178.2 L630.3 175.9 L628.6 172.8 L625.8 171.2 L621.5 167.7 L619.5 166.1 L617.2 164.5 L616.7 163.2 L618.7 162 L620.1 160.8 L620.7 157.9 L623.8 156.3 L621.8 155.8 L618.7 156.5 L616.4 157.7 L612.4 159.2 L611.6 160.4 L612.7 163.6 L615.8 163.4 L612.7 164.9 L609.3 166.9 L607.3 167.3 L604.4 163.4 L607.3 160.8 L604.4 160.4 L603 158.7 L600.7 158.3 L599.5 158.9 L597.3 161.6 L596.5 164.1 L593.6 168.1 L593.4 170.8 L591.4 172 L590.5 174.7 L591.6 177 L594.5 179.5 L594.2 180.4 L591.6 180.4 L590.2 180.6 L587.9 182.7 L586.4 183.8 L588.2 181.9 L586 181.9 L585.7 181 L581.4 180.6 L580.3 182.7 L581.4 183.6 L580 184.2 L578.6 184.4 L577.4 183 L577.1 181.9 L576.3 184.2 L577.4 186.8 L578.3 188.2 L580.3 190.8 L580.4 192.7 L579.1 191.7 L577.4 191.8 L578 193.6 L577.7 197 L576 197.2 L573.7 195.8 L572.6 192.2 L573.7 190.4 L572 190 L570.9 188.2 L569.5 185.6 L568.9 185.3 L566.9 182.7 L567.2 179.3 L567.2 177.2 L564.6 174.9 L563.5 174.1 L560.4 172.4 L558.6 170.8 L555.2 168.5 L554.4 164.9 L553 163.6 L551.8 165.7 L550.4 162.8 L551.1 162.2 L549.3 162.2 L547 163.2 L547.3 165.3 L547 168.1 L550.4 170.4 L552.4 174.9 L555.2 177 L558.1 177 L557.2 178.5 L560.1 180 L563.2 181.7 L564.6 183.8 L564.2 184.9 L562.9 183.2 L560.9 182.5 L559.2 184.2 L558.9 185.3 L560.6 187.9 L558.9 188.9 L557.8 191.7 L556.5 191.1 L557.1 188.9 L558.1 188.6 L557.7 186.8 L556.8 184.5 L555.5 184.2 L554.5 183 L554 181.7 L552.7 181.9 L552.5 181 L551 179.5 L547.8 178.7 L546.7 177.6 L545.6 176.2 L543.6 175.1 L541.9 173 L541.3 170.6 L540.7 168.8 L539.9 168.5 L537.3 167.3 L535.3 169 L533.3 169.8 L532.5 170.2 L530.8 172 L528.8 172.4 L527.2 171.6 L525.1 171.4 L523.4 170.6 L522 171.6 L520.7 173.2 L521 175.1 L521.1 177 L518.3 178.9 L515.4 180 L514 181.9 L512 184.5 L511 186.2 L512.6 188.8 L510.6 190.4 L509.9 192.7 L507.7 193.6 L506.6 195.1 L505.7 196 L505 195.6 L502 196.1 L499.5 196.1 L496.8 198.1 Z M0 34 L5.7 37.7 L11.4 43.1 L15.6 47.5 L22.8 49 L27 52.6 L29.3 55.4 L26.7 58.9 L22.8 60.3 L22.2 64.3 L19.9 67.6 L12.8 65.7 L8.5 61 L4.3 59.6 L2.8 54.7 L0 56.1 L0 59.6 Z M0 12.7 L4.3 12.3 L7.1 15.4 L2.8 18.5 L0 18 Z M1020.3 16.3 L1024 12.7 L1024 18 L1021.2 18.5 Z M495.8 143.6 L500.1 142.2 L502.3 141.1 L506.3 141.1 L509.2 140.4 L512.9 140.4 L516 138.6 L516 137.5 L514 137 L514.8 135.7 L516.8 132.4 L515.7 130.3 L512.6 130.3 L512.9 128.2 L511.7 126.7 L511.4 124.8 L508.6 122.1 L507.4 117.9 L506 115.9 L502.9 115.4 L504.6 113.8 L506 110.2 L506.9 107.6 L506 106.5 L502.3 106.5 L500.1 107.6 L503.2 101.7 L497.8 101.7 L496.9 104.9 L495.5 108.1 L496.1 112.8 L494.4 111.8 L496.4 115.9 L496.1 118.9 L498.3 117.4 L498.3 121.1 L502 120.9 L503.2 125.3 L503.8 128.6 L500.1 129.1 L498.9 131 L500.3 132.4 L497.2 135.2 L500.6 136.6 L503.5 137.5 L502.9 138.4 L499.2 138.9 L495.8 143.6 Z M482.7 135.7 L485 137.3 L488.7 135.7 L492.4 134 L494.1 133.8 L494.9 130.1 L494.6 126.7 L496.1 122.9 L494.4 119.4 L491.2 118.6 L488.4 119.9 L487.5 123.3 L483.6 124.3 L484.1 128.2 L486.4 129.4 L485 131.5 L482.7 134.3 L482.7 135.7 Z M543.6 116.9 L547 114.9 L547.8 117.4 L546.4 120.6 L544.1 119.4 Z M539.9 117.9 L542.4 117.6 L542.7 119.9 L540.4 120.1 Z M543.3 121.1 L546.7 121.4 L545.6 122.4 L543.3 121.9 Z M563.5 108.6 L566 105.2 L566.6 106.5 L565.2 109.2 L563.8 110.7 Z M558.6 113.8 L560.6 108.4 L560.1 110.2 L558.9 114.3 Z M574.3 103.3 L575.1 101.7 L578 101.7 L577.1 103.8 L574.6 105.2 Z M574.9 99.8 L577.1 99.2 L577.1 100.6 L575.4 100.8 Z M567.8 92.4 L569.7 91.6 L569.7 93.6 L568.3 93.3 Z M658.5 11.8 L662.8 19.7 L669.9 20.6 L675.6 20.6 L674.1 12.7 L669.9 6.3 L669.9 -3.2 L672.7 -10.3 L677 -16.5 L668.4 -16.5 L664.2 -4.2 L660.8 5.4 Z M649.4 32.2 L652.8 29.8 L655.1 33 L652.8 36.2 L650.2 35.4 Z M678.4 24 L681.2 21.5 L684.1 25.7 L681.2 28.1 Z M536.5 175.1 L538.7 172.8 L539 176.2 L538.2 178.9 L537 178.2 Z M535.3 180.8 L538.2 179.5 L539.6 182.3 L539.3 187.1 L537.6 187.9 L535.9 187.9 L535.9 184.2 Z M547.3 191.5 L549.8 190.8 L556.4 190.4 L555 194 L555 196.3 L552.7 195.1 L547.6 192.9 Z M578.8 200 L581.7 200.7 L586.8 201.1 L586.5 202.1 L582.3 202.3 L578.8 201.2 Z M603.9 201.9 L605.9 200.9 L610.4 199.7 L608.7 202.1 L605.9 203.5 L604.2 203 Z M590.8 198.1 L592.4 197 L591.9 198.4 L590.9 199 Z M577.4 188.2 L578.6 187.9 L580.8 189.3 L582 191.5 L580.3 190.4 L578.8 189.3 Z M585.5 187.1 L587.1 186.6 L587.7 187.7 L586.2 187.9 Z M585.7 189.5 L586.4 189.5 L586.2 190.8 L585.7 190.6 Z M518.7 185.6 L520.8 184.4 L521.8 185.3 L520.7 186.8 L519.4 186.2 Z M522.8 184 L524.2 184.2 L523.9 184.7 L523 184.4 Z M515.4 188 L516.6 187.5 L516.3 188.4 Z M491 81.5 L493.5 80.3 L492.9 82.7 L491.5 82.7 Z M507.4 92.7 L509.2 89.8 L508.9 93.9 Z M502.6 99.5 L504.3 98.9 L503.8 100.3 Z M491.8 104.9 L494.1 102.8 L493.8 104.9 L492.1 106.5 Z M493.2 108.1 L494.6 107.1 L495.5 109.2 L494.1 109.4 Z M917.6 123.8 L919.3 127.7 L919.6 133.8 L919.3 139.3 L921 143.8 L923.3 148.2 L919.6 146.9 L918.5 152.5 L919.9 157.5 L920.2 160.4 L917.9 157.9 L915.9 160.8 L916.2 154.6 L916.5 148.2 L916.2 141.6 L915.3 136.1 L915.3 130.5 L916.8 127.2 Z M915.6 162.8 L918.8 166.5 L922.5 168.8 L925.3 167.7 L926.2 171.4 L923 172.8 L919.6 176.6 L915.9 174.3 L913.1 175.1 L911.1 178.5 L910.2 176.6 L911.4 172 L914.5 171.2 L915.1 166.9 Z M913.9 178.9 L914.5 182.3 L915.9 186 L914.8 190.4 L913.1 192.2 L912.8 195.4 L911.9 198.3 L912.5 199.7 L909.9 202.3 L909.4 200.4 L907.7 201.8 L906.8 203.3 L905.1 203.3 L901.7 203.5 L901.4 204.4 L899.7 207.3 L898.3 207.4 L896.3 204.9 L897.1 203.3 L894.9 203 L892 204.2 L888.6 204.9 L887.5 205.9 L884.3 205.7 L884.6 204.2 L888.3 201.8 L890.9 200.2 L894 200.2 L896.9 199.7 L898.8 199.5 L899.1 197.6 L901.1 195.1 L901.4 193.3 L902.7 193.5 L901.7 195.8 L906 194 L908.5 190.8 L910.2 187.1 L910.2 184.2 L910.2 181.9 L911.1 179.7 L913.1 180.6 L913.9 178.9 Z M888.9 206.9 L890.3 205.2 L893.7 204.4 L895.1 206.1 L893.7 207.9 L891.2 207.6 L890.2 209.8 L888.9 209 Z M884.3 205.9 L886.6 206.9 L887.2 209.3 L885.8 213.3 L883.8 215.7 L882.3 214.7 L882.3 211.7 L881.2 210 L880.9 207.9 L882.9 206.9 Z M857.7 234.1 L858.7 235.2 L857.3 240.9 L855.8 244.6 L853.6 241.2 L854.2 238.8 L856.2 235 Z M821.2 252.8 L823.8 250.6 L826.6 250.1 L827.7 251.6 L826 254.3 L823.5 255.8 L821.2 254.9 Z M855 254.9 L858.7 255.5 L859.9 258.5 L859.6 261.8 L857.9 263 L858.2 267.4 L860.7 267.4 L864.1 268.9 L865 272.4 L862.7 271.2 L860.4 269.4 L858.2 268.4 L855 268.9 L855 266.8 L853 263 L854.2 261.5 L854.5 257.9 Z M854.5 270 L856.7 269.9 L857.6 272.1 L856.7 273.5 L855.6 272.1 Z M858.7 274.4 L862.2 275.4 L860.7 278.2 L859 278.6 L859 276.4 Z M860.2 279.9 L862.4 277 L863.3 278.2 L862.4 282.2 L860.7 281.6 Z M863 279.9 L864.9 276.1 L864.7 278.8 L863.3 281.4 Z M865.6 272.7 L868.4 272.5 L869.5 276.4 L867.6 276.7 L867 274.7 Z M865.6 275.6 L867.6 276.1 L868.1 279.3 L867 279.6 L865.8 277.3 Z M864.1 280.3 L866.1 279.6 L866.3 280.8 L864.7 281.1 Z M845.4 284.5 L849.1 280.5 L851.6 277.6 L852.5 278.5 L849.6 281.9 L846.5 284.5 Z M858.7 288.5 L860.7 286 L863 283.7 L867 284.2 L869 280.5 L871.3 284.2 L872.1 287.7 L871 290.5 L868.7 292.5 L869.5 288.8 L868.4 291.1 L865.3 290.8 L864.7 286.8 L862.7 287.1 L859.6 288.8 Z M823.8 302.8 L825.7 303.7 L828.3 304.5 L828.9 301.7 L833.1 299.7 L836 296 L839.7 294.3 L842.2 291.4 L844.2 288.7 L846.8 290.3 L851.1 293.7 L847.9 296 L846.5 298.5 L847.6 302.2 L850.5 305.7 L847.4 306.2 L846.2 310.5 L843.4 312.8 L842.8 315.9 L842 318.7 L838 320.2 L835.7 318.2 L830.6 318.2 L825.5 316.8 L824.9 313.1 L822.6 310.2 L822 307.4 L822 304.8 L823.8 302.8 Z M783.1 292.5 L789.3 293.5 L791.6 296.5 L796.2 300 L798.7 302.2 L802.1 304.2 L806.1 307.1 L807.3 309.1 L809.2 311.3 L809.2 313.9 L813.5 316.8 L813.2 320.5 L812.9 325.2 L809.5 325 L807.8 322.7 L803 319.9 L799.9 316.2 L797.6 311.9 L794.2 307.6 L792.7 303.7 L789.9 301.7 L787.9 298.5 L783.6 294.8 L783.1 292.5 Z M811.2 327.9 L813.8 325.3 L815.8 325.9 L820.1 326.5 L821.2 327.9 L826 328.3 L827.7 326.9 L832.3 328.2 L837.4 330.8 L837.7 333.3 L833.4 332.3 L826.3 331.6 L820.6 330.8 L814.9 329.6 L811.2 327.9 Z M837.7 331.6 L841.1 331.9 L843.9 332.3 L847.1 331.9 L850.2 332.2 L850.8 333.3 L844.8 334.3 L840.8 333.6 L838 333.1 Z M852.8 332.8 L856.2 332.5 L861.3 331.6 L861.9 332.5 L857.6 333.9 L853 333.8 Z M850.5 335.5 L853.9 335.6 L855.6 337.4 L853 337.8 Z M863.3 338 L866.1 334.8 L869.5 333.2 L874.1 332.5 L871.8 334.2 L867.6 337.1 L864.1 338.2 Z M852.8 306.5 L855.6 304.8 L861.9 305.8 L866.1 305.1 L868.1 303.9 L865.8 307.2 L862.7 307.5 L857.6 307.2 L854.2 308.5 L853.3 311.1 L856.2 312.5 L861.3 310.9 L863 311.3 L858.5 313.9 L859.9 317.6 L862.2 320.5 L860.4 322.2 L857.9 320.5 L856.2 316.2 L854.2 316.8 L854.5 324.2 L851.9 324.2 L851.9 318.5 L849.9 316.5 L851.3 312.2 L852.8 306.5 Z M874.7 303.1 L876.1 302.2 L878.1 304.2 L876.7 307.4 L876.1 310.5 L875.2 307.6 L874.7 305.7 Z M875.8 317.6 L880.4 316.6 L884.1 317.9 L883.2 319.3 L878.9 318.2 L876.1 318.5 Z M870.4 317.6 L873.8 317.6 L873.8 319 L871 319.3 Z M884.6 310.8 L888.9 309.6 L893.2 310.8 L893.7 315 L896 317.9 L899.7 314.8 L904 312.8 L908.8 314.2 L913.1 315.9 L918.8 318.2 L923 319.5 L926.7 322.7 L930.1 325.3 L932.4 327.3 L930.4 328.2 L933.5 331.6 L937.2 334.2 L940.9 338 L938.1 338.5 L931.6 337.1 L927.9 333.1 L923 330.2 L920.2 332.2 L918.8 334.8 L914.5 334.8 L910.2 331.9 L906.8 332.2 L905.1 329.3 L906.8 327.9 L904.5 324.2 L898.8 321.6 L893.2 319.6 L890 320.2 L889.7 317.9 L892.3 315.6 L888.3 315 L885.2 312.8 L884.6 310.8 Z M933.8 324.5 L938.7 322.7 L944.9 320.5 L944.9 322.7 L941.5 325.3 L937.2 326.5 L934.1 325.3 Z M940.9 315.9 L944.4 317.9 L947.2 321.3 L946.1 320.5 L942.9 317.6 Z M951.8 323.3 L955.4 327 L954 327.6 L952 325 Z M965.7 331.3 L969.4 333.9 L970 336.2 L967.7 335.9 L966.3 334.8 Z M978.5 366.9 L982.8 369.6 L987 373.3 L985.6 373.6 L981.3 370.8 L978.8 368.1 Z M1016.3 359.1 L1020 359.4 L1019.4 361.2 L1016.6 360.9 Z M1020.6 356.1 L1023.7 355.2 L1022.6 357 Z M985.9 351.7 L987.6 352.5 L987.6 354 L986.5 353.4 Z M739.1 280.6 L740.4 281.4 L743 284.2 L744.8 287.4 L744.4 290.3 L741.3 291.6 L739.6 290.5 L739 287.7 L739.1 284.8 L739.8 281.9 Z M775.7 269.7 L776.5 270.3 L776.2 274.7 L775.1 275 Z M835.4 374.2 L836.8 372.1 L839.1 371.1 L844.2 368.4 L849.1 367.5 L852.8 366.4 L857.6 364.2 L859.9 360.9 L859.6 357.6 L863.6 358.5 L863.6 355.2 L866.1 355.5 L868.1 352.3 L871 349.3 L873.2 348.4 L876.7 351.1 L880.6 351.4 L880.4 347.3 L882.6 345.5 L884.1 344 L889.2 343.2 L889.2 341.1 L891.7 342.3 L896.9 343.5 L901.1 342.9 L900.6 345.8 L898.6 347.6 L897.4 351.4 L901.7 354.3 L907.9 358.2 L911.9 359.4 L913.9 354.6 L915.1 350.2 L914.8 345.8 L916.5 340 L917.3 339.1 L919.3 342.9 L920.5 348.7 L923.3 349.6 L925.6 351.7 L925.9 356.1 L927.9 360.6 L928.4 363.6 L934.4 366.9 L937.8 373.9 L940.9 375.8 L943.8 378.9 L947.8 382 L947.8 387.7 L948.9 393.5 L947.2 400 L945.8 406 L942.4 410.8 L940.9 415.6 L938.7 421.2 L938.5 423.7 L933 425.2 L928.4 429.5 L924.4 427 L923.3 425.9 L920.2 428.6 L914.8 427 L911.4 425.2 L909.4 421.6 L908.5 417.7 L904.8 417.2 L906 414.5 L904.5 412.1 L903.4 415.4 L901.1 415.8 L903.1 411.4 L904.2 408.7 L904 406.7 L901.7 410.4 L898.6 414.2 L896.6 413.2 L893.7 407 L888 404.7 L884.6 403 L878.9 403.7 L870.4 405.7 L864.7 408 L863.3 411.1 L856.2 411.1 L851.9 412.8 L847.6 415.1 L842 414.4 L839.4 412.6 L839.1 410.1 L841.1 409.1 L841.1 404.3 L839.1 399 L838 394.1 L836.3 389.9 L834.3 386.1 L835.7 382.6 L834.6 380.4 L835.4 374.2 Z M923.6 435.4 L928.7 437 L933.8 436.2 L933.8 441.1 L932.7 445 L929.6 446.6 L927.3 446.2 L925.3 442.3 L923.6 437.7 Z M900.6 417.5 L904.8 417.7 L903.4 418.6 L900.6 418.4 Z M882.6 341.1 L885.8 340.9 L885.8 342.4 L882.9 342.3 Z M900 348.1 L901.4 348.4 L901.1 349.5 L900 349.3 Z M1003.2 412.8 L1004.9 414.9 L1007.8 415.9 L1009.2 419.4 L1011.2 420.5 L1012.3 423.7 L1015.5 425.2 L1019.2 424.1 L1019.7 424.4 L1018 429.5 L1015.5 430.6 L1015.2 432.8 L1012.6 437.3 L1010.3 438.8 L1008.8 437.7 L1010.1 435.1 L1009.8 432.5 L1006.4 431 L1008.6 428.4 L1009.2 424.8 L1008.9 421.9 L1007.5 419.4 L1004.7 415.9 L1003.2 412.8 Z M1003.2 434.7 L1004.4 437 L1006.9 436.6 L1007.8 439.2 L1005.5 443.5 L1003.5 445.8 L1004.4 447.6 L999.8 448.9 L999 452.1 L997.5 455.8 L994.1 458.7 L991 458.7 L988.2 457 L985.6 455.4 L987 452.1 L990.4 448.9 L994.1 446.6 L998.4 442.7 L999.8 439.2 L1001.5 436.2 L1003.2 434.7 Z M988.4 459.7 L990.4 459.9 L989.9 461.4 L988.4 461.2 Z"/>
<path fill="#99c2ee" d="M645.7 162.4 L650 159.6 L654.2 158.3 L659.3 156.7 L663.3 157.9 L662.8 163.6 L657.9 164.1 L657.1 166.9 L655.1 167.7 L657.6 172 L661.3 173.9 L662.2 177.8 L666.2 177 L664.2 180.8 L662.2 184.2 L663.6 186.8 L665.3 191.5 L665.3 195.4 L659.9 196.5 L655.1 194.4 L651.9 192.9 L651.1 189.7 L652.5 186.8 L652.8 183 L655.1 182.7 L652.5 180.4 L650.2 177 L647.4 173.2 L647.1 170.8 L646.8 166.9 L645.1 165.3 Z"/>
<path fill="#90c9f2" d="M677.8 161.2 L680.7 160 L682.4 162.4 L681.2 166.5 L679 168.1 L677.5 166.1 L678.1 163.6 Z M683.5 158.3 L686.1 157.5 L687.2 159.2 L684.7 160.8 Z M721.1 163.2 L723.9 159.6 L728.2 157.7 L732.4 157.9 L736.7 157.5 L736.7 159.6 L732.4 159.6 L728.2 159.6 L725.3 162.4 L722.5 165.3 Z M728.7 174.9 L731.9 173.9 L734.7 174.3 L732.4 176.1 L729.6 175.9 Z M807 137 L809.5 138 L812.7 135.7 L817.8 132 L821.5 128.2 L824.6 120.4 L824.6 116.4 L822 116.9 L820.6 122.4 L817.2 128.2 L813.5 132 L809.2 135.2 Z M597.9 93.9 L601.6 94.2 L605.6 91 L605 86.9 L600.2 83.9 L597.3 86.9 L597.9 91 Z M609.6 88.1 L613.8 88.7 L615.8 85.1 L613 79.1 L610.7 78.5 L612.1 83.3 L610.1 84.5 Z M547.3 101.7 L549.5 102.8 L551.8 99.5 L549.8 97.3 L547.8 98.9 Z M552.4 106 L553.5 106 L554.4 101.7 L553.2 102.2 Z M588.8 100 L591.1 99.5 L591.4 103.3 L589.9 105.5 L589.4 102.8 Z M632.6 189.7 L635.2 187.9 L636 189.7 L633.7 190.4 Z M640.3 191.1 L641.7 190.8 L642.6 194 L640.9 194.7 Z M602.5 311.1 L603 308.2 L606.4 307.4 L609 307.9 L609 311.3 L606.7 314.8 L605.9 316.5 L603 315.6 L602.2 313.6 Z M595.3 318.2 L596.5 321.3 L596.8 325.6 L599.6 329.9 L600.5 333.3 L598.8 332.2 L596.2 327.9 L595.1 323.3 L594.8 319.9 Z M608.7 335.9 L610.1 338.5 L611.3 341.7 L612.1 347.3 L612.1 349.6 L610.4 348.7 L609.8 344.3 L609 340 Z M614.1 295.7 L615.3 296.3 L616.1 300 L614.7 301.4 L614.4 298.5 Z M598.5 305.4 L601.3 302 L601 303.9 L599.6 305.7 Z M551.3 269.7 L553.5 270 L553 272.1 L551.3 271.5 Z M312.9 352.5 L314.6 353.1 L316.3 355.5 L314.3 355.2 Z M250 157.7 L254.6 154.2 L258 152 L261.1 149.5 L266 149.2 L270.2 152.7 L271.1 156.7 L270.8 158.7 L267.4 158.3 L263.1 158.7 L260.8 156.7 L257.4 157.3 L253.7 157.9 Z M262.3 176.6 L264.5 178 L266.5 174.7 L266.2 169.6 L267.9 165.3 L270.2 162 L267.9 160.8 L265.1 162 L262.8 164.5 L261.7 166.5 L263.1 168.8 L262.3 172.8 Z M271.1 161.2 L274.5 160.4 L278.8 160.4 L281.6 161.2 L284.4 163.6 L285 166.1 L282.2 166.5 L280.2 164.5 L279.6 168.8 L279 171.6 L277.3 172.8 L277 169.2 L274.8 169.6 L273.4 170 L275.1 166.9 L274.8 164.1 L272.5 162.2 Z M274.8 177.8 L277.3 178.9 L281 177.4 L284.7 175.9 L287.6 173.4 L285.9 173.4 L282.2 174.1 L278.2 175.9 L275.6 176.2 Z M285 171.6 L288.7 171.4 L293 171.6 L295.3 170.4 L294.7 168.3 L290.7 169 L286.7 169.6 Z M230.7 126.3 L233.2 125.8 L236.1 131 L237.8 136.6 L238.1 141.1 L236.1 142 L236.1 137 L233.8 133.8 L231 129.1 Z M225.8 131.5 L228.1 129.1 L229 133.4 L227.6 136.1 L226.4 133.8 Z M229.5 136.6 L232.1 138 L233 142 L231.5 142 L230.7 139.3 Z M195.7 101.1 L199.1 98.9 L204.2 96.4 L209.1 97 L211.1 98.4 L206.2 98.6 L200.5 100.6 Z M219.6 110.2 L221.9 104.9 L223 106 L221.9 112.8 L219.9 112.8 Z M179.2 88.1 L183.5 89 L187.2 88.1 L189.7 84.5 L194.8 80.3 L200.5 77.8 L201.4 76.6 L196.3 76.9 L192 79.1 L188.3 80.9 L184.3 79.7 L182 82.1 L179.8 85.7 Z M155.9 63 L160.7 63 L163.6 59.6 L167.8 57.5 L170.7 56.1 L175.8 56.1 L177.2 52.6 L172.7 49.7 L168.4 51.9 L165 49.7 L160.7 53.3 L157 54.7 L155.6 58.9 Z M305.8 54 L312.9 49.7 L314.3 54 L310 56.8 Z M307.2 63 L311.5 61.6 L311.5 65 L307.8 65.7 Z M267.7 274.1 L269.7 274.4 L270.8 276.7 L269.1 276.4 Z M258.8 146.4 L261.1 142.9 L261.7 146 Z M887.5 164.1 L889.7 164.1 L889.5 166.5 L887.8 166.5 Z M795.3 195.1 L798.4 195.1 L798.2 196.5 L795.9 196.5 Z M807 270.6 L809.2 272.7 L808.4 273 L806.7 271.2 Z M510.6 285.1 L512.9 287.4 L512.3 289.7 L511.1 287.7 Z M588.5 360.6 L593.9 356.4 L594.2 357.3 L589.4 360.9 Z M592.8 333.1 L594.8 333.3 L594.2 335.4 L593.1 335.1 Z M649.1 119.4 L652.8 118.9 L652.2 124.3 L650.2 127.2 L649.7 123.3 Z M619.5 102.2 L622.1 100.6 L622.4 104.4 L620.4 104.4 Z M309.2 157.9 L312.9 155.4 L317.2 150.3 L322 146.4 L322.8 147.7 L317.7 151.6 L313.5 156.7 L309.5 158.5 Z"/>
<path fill="#90c9f2" d="M877.9 -0 L910.5 -0 L909.8 10.4 L887.2 19.1 L880.3 8.6 Z"/>
<path fill="none" stroke="#b4b1ad" stroke-width="0.8" stroke-linejoin="round" d="M161.3 148.2 L241.4 148.2 L241.4 146.4 L242.9 149.5 L247.5 149.9 L251.7 152 L256 152 L257.4 152.5 L260.6 151.2 L270.5 157.1 L271.6 158.7 L274.2 160.4 L274.8 161.6 L277.3 163.6 L278.5 170.4 L277.6 172.8 L277.3 174.3 L275.6 175.5 L275.6 176.6 L276.8 177.8 L281.6 175.9 L287.3 173.5 L287.1 171.8 L286.7 171 L293.5 170.3 L294.7 168.5 L297.8 165.7 L299.5 164.9 L308.6 164.9 L308.9 163.9 L310.6 163.2 L312 161.2 L312.9 157.9 L315.2 154.8 L317.7 155.2 L319.1 156.3 L319.1 162 L320.3 163.6 L321.1 164.5 M110.9 28.6 L110.9 92.2 L116.3 93.3 L120.9 99.5 L123.7 97.3 L126.6 95 L128 97.8 L130.8 100.6 L132.6 102.8 L136.5 110.2 L137.1 112.3 L141.9 114.9 L142.2 119.4 L141.4 121.9 M178.9 210.6 L185.7 209.9 L185.5 210.7 L196.1 214.6 L204.2 214.6 L204.2 213.1 L209.1 213.1 L213.3 216.7 L214.8 220 L218.5 222.2 L220.4 219.8 L223.6 219.7 L225.6 221.9 L226.7 224.5 L229 227.1 L230.1 230.6 L232.7 231.7 L235.7 232 M249.7 266.7 L249.7 264.6 L251.2 262.2 L254.9 262.1 L254.9 261.2 L252 258.7 L253.2 258.7 L253.2 257 L258.4 257 L258.3 262.7 L260.8 263.3 M258.4 256.6 L260.8 254.9 M258.3 265.6 L257.8 267.1 L255.7 269 M257.8 267.1 L260.3 268.4 L262.3 270 L262.3 271.2 M263.7 271.2 L265.4 270.3 L267.1 268.3 L270.2 266.5 L273.1 266.1 L275.3 265.3 M268.2 276.7 L271.1 276.9 L273.9 277.3 M276.2 285.4 L276.2 282.8 L277 281.2 M290.4 287.8 L292.1 285.7 L291.8 283.8 M308.1 251.3 L307.9 254.6 L307.9 256.3 M309.2 274.6 L305.8 276.7 L304.4 281.9 L306.1 284.5 L306.1 287.4 L309.5 288.5 L312.6 288.5 L314.6 291.1 L320 290.8 L319.1 293.4 L319.1 296.5 L320.6 298.8 L319.1 300.5 L321.7 305.1 M321.7 305.1 L321.1 303.7 L313.5 303.7 L313.3 305.4 L314.6 306.5 L312.9 306.9 L312.9 309.1 L314.6 311.6 L313 320.5 M313 320.5 L310.9 319.3 L312.7 316.2 L308.9 315 L304.6 315.3 L302.4 312.2 L299.2 309.1 L297.8 308.8 L295 307.4 L291.6 306.5 L287.9 304.5 M297.8 308.8 L298.1 311.3 L294.1 315.9 L290.7 317 L289 318.2 L288.1 321.6 L285.9 322.7 L283.3 321.2 L283.6 318.2 M313 320.5 L304.6 323 L303.8 325.6 L302.4 328.2 L301.5 329.9 L304.4 334.2 L306.6 337.1 L311.2 335.6 L311.2 340 L314 339.8 M314 339.8 L316.6 344.3 L315.7 347.8 L314.6 351.1 L315.4 352.5 L314 353.4 L315.7 355.2 L314 358.5 L314.3 359.1 L311.8 361.6 M314.3 359.1 L316 363.6 L317.2 366.6 L318 371.1 L318.9 375.1 L320.9 375.1 M314 339.8 L318 340 L322.6 336.8 L326 336.2 L326.3 341.4 L328.8 344.2 L333.4 345.8 L336.2 347.3 L339.9 348.1 L340.8 355.5 L345.9 355.5 L346.2 358.5 L348.4 360.6 L347.6 363.6 L346.6 366 L346.6 367 M346.6 367 L343.9 364.5 L336.5 365.4 L334.8 368.1 L333.8 373.4 M333.8 373.4 L333.4 372.7 L329.1 375.1 L328.8 373 L326.5 373 L323.4 372.1 L320.9 375.1 M346.6 367 L347.3 373 L353.3 373.6 L354.4 378.9 L357.5 379 L356.7 383.9 M333.8 373.4 L338.5 378.2 L344.2 381.4 L348.2 382.9 L345.3 389.1 L351.6 389.6 L353 389.3 L356.7 383.9 M356.7 383.9 L359 384 L359 388.8 L353.3 392.8 L348.2 398.7 M348.2 398.7 L352.7 400.7 L353.8 401 L358.4 404.3 L360.1 406.7 L360.1 410.6 M348.2 398.7 L346.5 406.3 L345.9 411.1 M320.9 375.1 L321.4 378.9 L317.4 380.4 L317.2 386.1 L314.3 393.1 L313.5 398.7 L311.5 403 L312.9 409.1 L313.5 412.5 L311.5 415.9 L310 420.2 L309.5 428.4 L308.1 432.8 L307.5 440.4 L308.1 448.2 L309.2 454.2 L307.2 460.3 L305.8 468 L302.9 471 L304.4 476.3 L306.3 477.7 L306.3 482.3 L312.9 482.3 L317.4 483.9 M321.7 305.1 L325.7 306.5 L327.1 305.4 L330 303.1 L330 301.4 L331.7 302.2 L329.1 296.8 L333.4 297.1 L339.3 293.7 M339.3 293.7 L337.4 291.5 L338.2 289.4 L340.5 288.3 L339.3 287.1 L341.9 284.8 M339.3 293.7 L341.3 294.3 L341.6 295.7 L342.5 297.4 L341.6 301.7 L344.2 304.8 L347 304.2 L351.3 303.1 L353 302.8 L356.7 302 L361.5 302.2 L364.1 299.1 L365.1 296.8 M349.6 291.5 L349 293.7 L347.6 295.4 L347 297.7 L349 299.1 L351.3 303.1 M358.4 292.3 L357.1 294.3 L358.4 298.3 L356.7 302 M505.7 201.8 L507.2 203.8 L507.2 207.3 L508.6 210.7 L503.8 212 L501.2 215 L496.4 219.3 L490.7 220.9 L487.3 223.2 L487.3 227.7 L498.3 235 L517.1 248.6 L521.1 251.9 L521.4 253.4 L523.9 253 L528.5 252.1 L533.3 247.8 L546.1 239.7 L552.4 242.5 L554.7 241.2 L580.3 251.9 L580.3 250.4 L583.1 250.4 L583.1 244.3 L617 244.3 M487.3 226.5 L474.5 226.5 M487.3 231.9 L477.9 231.9 L477.9 239.9 L475 241.2 L475 246.3 L463.8 246.3 M498.3 235 L493.5 235 L496.1 260.9 L496.4 263.9 L485.5 263.9 L481.6 264.2 L479.3 263.6 L477.3 265.9 M465.1 262.1 L470.8 260.6 L474.2 263.9 L477.3 265.9 L477.9 268.6 L479.6 273 M464.2 269.4 L467.9 269.4 L472.2 269.4 L472.7 270 L468.8 270.6 L464.2 270.9 M464.5 273.1 L467.9 272.2 L473 272.2 L473 274.1 L479.6 273 M473 272.2 L473 275 L469.6 277.2 M479.6 273 L481 273.5 L482.7 273.5 L486.7 273.2 L488.4 277 L489.5 279.3 M474.2 282.7 L476.4 280.2 L480.1 279.9 L481.6 282.5 L482.7 284.2 M479.3 288.7 L481.8 285.7 L482.7 284.2 L485.3 287.4 L488.4 286.8 M482.7 284.2 L484.7 284.5 L488.4 286.8 L489.5 279.3 M490.5 296 L490.7 292 L488.1 290.3 L488.4 286.8 M489.5 279.3 L494.4 278.5 L496.4 278.8 L496.4 275.9 L499.5 273.2 L500.6 270 L502.6 269.2 L503.8 268.3 L506.3 267.7 L510 265.2 L512.6 265.3 L512.7 265.6 M496.4 278.8 L498.9 280.8 L504 281.1 L504.3 281.9 L502.9 289.1 L504 294 M504 281.1 L504 277 L510.6 277 L512 276.7 M515.4 291.1 L514 288.5 L513.4 284.2 L512 278.2 L512 276.7 L514.6 277 M516.7 290.7 L516.6 282.8 L514.3 278.8 L514.6 277 L518.8 274.4 L518.8 273.2 M519.7 290.3 L519.8 285.7 L522.2 279 L522.2 275 L518.8 273.2 L518 272.1 L514.8 270 L512.7 265.6 M514.6 277 L518.3 274.4 L518 272.1 M512.7 265.6 L515.7 264.5 L522 264.2 L523.9 260 L523.9 253 M522.2 275 L523.4 271.2 L527.6 268.6 L531.9 271.2 L536.2 270.9 L540.4 270.3 L547.6 270.9 L550.7 269.2 M536.2 295.4 L537 292 L541 288.8 L544.1 289.7 L546.1 286.2 L548.4 283.4 L551 277.3 L553.5 275.6 L552.4 273 L552.1 270.9 L550.7 269.2 M550.7 269.2 L550.4 267.1 L556.1 259.7 L557.2 249.2 L554.7 245.9 L554.7 241.2 M546.1 239.7 L545 237.2 L541 236.3 L539 230.9 L540.2 219 L539 218 L541 215.7 L544.7 210.7 L544.7 208.5 M539 218 L535.6 210.7 L533.6 207.9 L535.3 202.8 L536.5 195.4 M583.7 213.7 L583.1 221.3 L583.1 244.3 M580.3 251.9 L580.3 263.3 L577.1 263.6 L576 268 L574.9 271.2 L577.1 277.3 L579.4 283.4 M552.1 270.9 L554.7 273.8 L555 277.6 L556.1 279.9 L551.5 280.8 L555.2 287.1 M555.2 287.1 L553.2 291.1 L553.8 295.4 L558.1 302.2 M555.2 287.1 L560.4 286.8 L566 283.1 L573.2 278.2 L577.1 277.3 M579.4 283.4 L580.8 284.2 L584 287.1 L589.9 294 M579.4 283.4 L582 283.4 L582.5 280.5 L587.4 281.1 L591.6 281.9 L595.9 279.6 L600.2 280.6 L604.2 275 L606.4 278.2 L608.4 281.4 L609 284.2 L605.9 286.2 M617 244.3 L617.2 256.4 L621.8 256.4 M621.8 256.4 L617.2 259.4 L615.5 265.6 L616 267.5 L614.8 272.1 L611.8 274.7 L611.3 277.6 L609.6 278.5 L609 284.2 M616 267.5 L619.8 265.6 L622.9 266.5 L628.1 268 L632.6 272.7 L634.6 272.1 M632.6 272.7 L630.9 277 L633.7 277.2 L635.2 275.7 M633.7 277.2 L634.3 281.1 L637.2 283.1 L645.7 285.7 L648.5 285.7 L640 294.3 L634.3 295.1 L631.5 296.8 L631.2 297.3 M648.5 285.7 L651.4 282.8 L651.4 276.4 M605.9 286.2 L608.7 289.1 L611.6 293.1 L614.1 295.4 L617 295.8 L620.4 298.3 L624.4 298.7 L628.1 296.5 L631.2 297.3 L628.6 300.5 L628.6 310.8 L630.2 313.2 M614.1 295.4 L609.8 295.4 L607.3 297.8 L600.2 298.3 L599.6 298.5 L596.5 295.4 L589.9 294 M609.8 295.4 L611.6 303.1 L608.7 307.9 L608.4 311.3 M589.9 294 L583.1 294.3 L576 296.8 L570.3 295.4 L564.9 296.3 L564.9 298.5 L562.3 309.9 L558.1 314.8 L557.2 319.6 L553 322.5 L549 321.6 L546.7 325 M558.1 302.2 L564.9 298.5 M558.1 302.2 L549.8 302.2 L549.5 305.1 L553 309.9 L553.2 314.2 L547.6 315 L543.6 319.6 M539.9 302 L544.1 302.2 L544.1 305.7 L539.9 305.7 M544.1 302.2 L549.8 302.2 M546.7 325 L549.5 325.2 L559.2 325.3 L560.4 329.3 L566 328.5 L570.3 328.5 L574 329.3 L574.6 336.5 L575.1 340.6 L580.3 339.7 L580.3 345.8 L574.6 345.8 L574.6 355.2 L578.6 359.4 M578.6 359.4 L572.9 360.6 L564.6 358.8 L551.8 358.8 L545.6 358.5 M578.6 359.4 L584 360 L588.8 360.4 L594.2 354.3 L598.5 353.4 M580.3 339.7 L584 340.6 L588.5 342.6 L592.8 344.3 L596.8 347 L596.2 343.5 L592.8 342.3 L593.4 335.1 L599.6 331.9 L605.6 335.4 L606.4 335.9 M599.6 331.9 L596.2 327.9 L595.1 321.3 L595.6 316.5 L596.2 312.5 L597 306.2 L599.6 302 L599.6 298.5 M596.2 312.5 L598.8 311.5 L608.4 311.3 L619 317 L619.2 318.5 L623.5 321.9 M598.8 311.5 L599.8 315 L598.8 315.3 L598.5 316.6 L595.6 316.5 M598.5 316.6 L598.8 318.5 L595.6 321.2 M606.4 335.9 L606.7 339.4 L605.6 347.3 L598.5 351.7 L598.5 353.4 L601 354.6 L605.6 356.7 L605.9 363.6 L605 368.1 L604.2 370.5 L601 373.9 M611.3 341.7 L609.8 341.7 L610.4 347.3 L613.8 350.5 L612.4 357.9 L609.6 354 L609.8 349.9 L605.9 348.7 M611.3 341.7 L618.7 342 L627.1 338.5 M601 373.9 L595.6 373.3 L592.2 371.4 L590.8 368.1 L586.5 365.7 L584 360 M601 373.9 L603 380.4 L602.7 384.7 L603.3 387.7 L605.6 387.8 M595.6 373.3 L588.8 377.6 L585.7 381.2 L584.2 384.2 L577.4 382.9 L570.9 388 L568.9 381.4 L568.9 372.7 L571.7 372.7 L571.7 361.5 L578.6 359.4 M568.9 381.4 L568.9 392.8 L563.2 394.3 L558.8 393.5 M602.7 384.7 L601 384.3 L599.6 387.7 L601 389.3 L603.3 387.7 M589.1 396.7 L592.2 393.8 L595.3 395.1 L595.1 398 L591.9 400 L589.9 399 L589.1 396.7 M486.8 177 L488.7 176.2 L493.2 176.8 L494.4 178.2 L492.4 180.4 L492.4 183.4 L492.1 185.3 L490.7 185.5 L492.1 187.9 L491.2 190 L492.1 190.8 L490.7 193.3 L491 194.4 M506.9 171.4 L508 172.6 L510 173.2 L514 173.5 L516.1 174.3 L517 174.7 L517.7 175.3 L521 175 M533.3 169.6 L533.9 168.3 L531.6 167.3 L531.9 164.9 L530.9 164.5 L532.2 163 L531.3 161.4 L532.1 161.2 L531.3 159.2 L529.4 160 L529.4 158.7 L531.6 155.2 L533.6 154.2 L533.6 152 L535.3 148.2 L531.1 147.3 L530.1 146.2 L528.5 145.8 L525.8 143.1 L523.9 144 L523.8 142.5 L521.1 140.2 L519.3 138.9 M521.5 137.5 L524.1 137.5 L526.2 137.3 L528.6 138.6 L528.2 140.2 L529.1 140.4 L530.2 142.2 L529.5 143.1 L530.5 144.7 L530.1 146.2 M529.5 143.1 L528.5 145.8 M529.1 140.4 L529.4 138.4 L529.1 135.7 L531.3 135 L532.1 133.6 L532.2 129.1 L532.5 128.6 M536.6 120.9 L538.9 121.4 M552.4 125.8 L553 128.6 L552.2 130.8 L553.7 132.2 L554 134.5 L553.5 135.7 L554.8 138.2 L554.1 140 L552.7 139.3 L549.5 141.3 L546.4 142.5 L547.6 144.2 L548 146.2 L551.3 149.2 L550.1 150.3 L548.4 151.8 L549.1 154.6 L546.7 153.9 L543.3 155 L541.7 154.4 L539.3 154.4 L536.5 153.5 L533.6 154.2 M532.1 161.2 L534.3 161 L536 158.9 L537.3 161.4 L538.5 158.7 L540.7 159.6 L541.7 157.3 L539.3 156.5 L539.3 154.4 M541.7 157.3 L543.9 156.9 L546.7 156.5 L547.3 157.9 L551 158.7 L550.1 160 L550.7 161.6 L551.3 162.4 M551 158.7 L553.5 159.2 L556.5 157.9 L557.8 157.3 L558.9 155 L560.6 152.5 L560.2 149.9 L557.8 149.2 L554.7 148.2 L553.8 149.9 L551.3 149.2 M554.1 140 L555.8 140.2 L558.5 140.9 L558.1 142 L560.1 142.7 L562.3 142.5 L564.8 144.2 L565.6 146 L563.5 147.7 L560.9 148.8 L560.2 149.9 M565.6 146 L567.5 145.8 L569.2 147.3 L571.7 146.4 L576.1 147.7 L575 150.8 L570.3 150.3 L567.9 151.6 L565.5 153.3 L560.6 152.5 M576.1 147.7 L576.6 145.5 L580.6 141.3 L579.1 137 L579.1 132 L580 131.5 L578.8 125.5 L576.9 123.6 L568.3 123.1 M576.9 123.6 L576.6 120.4 L572.6 119.1 M578.8 125.5 L584.5 124.6 L585.4 120.9 L588.2 118.9 L587.7 116.9 L582.8 113.3 L577.1 113.3 L571.9 114.9 M587.7 116.9 L592.1 114.6 L590.8 108.1 L589.8 107.3 L587.4 107.3 L584.8 105.5 L581.3 105.5 M589.8 107.3 L589.9 104.9 L590.2 100 L592.2 97.3 M591.1 90.7 L595.3 86.3 L600.7 79.1 L601.6 76.6 L597.3 71.2 L598.8 67.6 L596.5 64 L597 56.1 L594.8 49.7 L597.3 44.2 L593.1 40 L592.8 34.6 L594.5 33.4 L599.6 27.3 M594.5 33.4 L595.3 29.8 L591.6 25.3 L586 28.1 L585.1 32.2 L582.8 36.9 L577.4 36.2 L573.4 31.4 L570.5 33.4 L574.6 38.5 L579.1 42.3 L579.1 47.5 L580.3 50.4 L580.7 57.5 M570.5 33.4 L568.9 38.5 L563.5 37.7 L562.9 41.9 L558.6 45.3 L558.6 49 L555.8 52.6 L553.2 55.4 L553.5 61 L550.8 65.7 L552.1 66.7 L551.5 69.6 L548.1 69.6 L546.4 72.8 L546.7 80.3 L547 83.9 L548.6 86 L546.7 88.1 L547.8 91 L545.6 94.4 L545.8 95.6 L545 99.5 L543.7 99.5 M579.1 137 L583.1 135.2 L588.8 136.6 L594.5 136.6 L598.8 138 L602.5 134.3 L601.6 129.6 L605 128.2 L602.5 125.3 L599.6 121.4 L599.9 117.4 L592.1 114.6 M602.5 134.3 L608.1 133.1 L613 139.3 L613.3 142 L618.7 142.5 L622.6 144.4 L626.1 145.5 L625.2 149.9 L624.9 153.1 L620.9 154.2 L620.7 156.3 M575 150.8 L577.1 152.7 L582 152.7 L587.7 151.4 L590.5 150.5 L594.8 152.9 L597.3 158.9 L594.3 158.9 L592.2 163 L596.3 164.1 M587.7 151.4 L591.9 157.1 L592.2 163 M577.1 152.7 L573.4 156.9 L569.6 160.2 L565.8 161 L561.2 161 L559.1 158.7 L557.8 157.3 M559.1 158.7 L556.5 160 L555.5 162.8 L553.5 162.2 L550.7 163 M556.9 164.1 L560.4 164.1 L565.8 165.5 L566.3 165.3 L565.8 161 M556.9 164.1 L557.5 166.3 L558.1 168.1 L562.1 172.8 L564.5 174.5 M566.3 165.3 L567.2 168.1 L567.5 170.6 L566.6 170.8 L564.6 174.3 M569.6 160.2 L572.9 164.1 L573.2 165.9 L575.9 166.1 L576.4 168.1 L577.4 169.6 L584.2 170.2 L588.8 168.3 L593.2 169.8 M576.4 168.1 L575.7 170.4 L577.4 172 L575.7 175.3 L573.4 175.7 L570.6 177.2 M566.6 170.8 L569.9 173.4 L569 174.5 M567 177.2 L567.9 174.3 L569 174.5 L570.6 177.2 L570.3 179.3 L571.7 181 L570.9 183 L569 185.3 M571.7 181 L577.1 179.1 L581.7 178.3 L586.2 179.1 L587 177.8 L587.7 179.1 L586.1 181.4 M575.7 175.3 L577.1 179.1 M587 177.8 L589.7 176.2 L591.8 176.8 M494.2 124.8 L491 124.3 L488.8 123.1 L491.2 120.1 M614.8 199.1 L616.2 197.7 L616.2 195.8 L620.1 195.8 L628.1 194.7 L632.5 194.7 L639.4 194.5 L637.7 191.5 L638.3 186.4 L639.4 185.3 L636.2 183.8 L636.4 181.4 L635.6 180 L632.9 178.7 L630.2 178.5 M625.8 171.2 L632.9 172 L636.6 174.3 L640.6 173.9 L644 177 L644.8 179.3 L640 179.3 L635.6 180 M640 179.3 L641.7 181.2 L642.8 183.4 L644.4 185.8 L644.3 188.2 M644 177 L646.5 179.3 L650.2 177.2 M639.4 185.3 L644.3 188.2 L648.5 185.3 L649.5 186.4 L651.1 189.9 M639.4 194.5 L641.1 198.6 L643.4 201.4 L642 203.7 L641.3 205.6 L643.3 208.5 L648.1 213 L647.7 215.7 L650.1 219.1 M632.5 194.7 L629.2 197.2 L629.5 200 L628.5 204.2 L622.4 207.8 L616.7 211.3 L613.4 210 M622.4 207.8 L623.5 211.8 L626.9 212.5 L631.8 215.3 L639.1 221.6 L644.4 221.9 L646.8 218.6 L648.4 219 M644.4 221.9 L647 222.2 L649.7 223.7 M623.5 211.8 L617.2 214 L620.1 217.3 L618.7 219 L616.5 219.5 L614.5 221.6 L611.4 221.1 M609.4 215 L611.3 220.6 M613.4 210 L613.1 214 L611.6 220.5 M611.8 208.6 L614 207.6 L616.1 204.9 L614.4 203.3 M633.7 261.2 L634.9 258.2 L637.7 258.2 L644 258.7 L647.1 259.1 L649.1 255.8 L651.7 254.6 L659.9 253.4 L668.4 250.4 L670.3 244.3 L669 242.2 L661.6 241.4 L658.8 237.8 M659.9 253.4 L663 260.5 M669 242.2 L670.7 237.5 L671.6 235.8 L672.4 235.2 M656.5 235.8 L657.9 236.6 M665.3 193.8 L669.6 191.1 L674.7 190.6 L679.5 192.7 L683.5 196.3 L686.1 196.3 L685.9 199.8 L684.2 204.5 L685.1 212.3 L687.8 214.3 L685.1 219.5 L687.6 223.4 L690.6 224.7 L690.6 227.9 L692.1 229.6 L688.1 231.1 L687.2 234.4 M685.1 219.5 L689.8 220.9 L694.3 220.9 L700.6 219.5 L700.9 216 L704.9 214.5 L709.1 212.7 L709.7 208.6 L712 207.8 L711.1 205.6 L714.2 204.4 L715.7 200.4 L715.7 197.4 L721.6 195.4 L725 194.2 M685.9 199.8 L689.8 201.1 L695.5 197.6 L698.6 194 L701.2 193.8 L704.9 194.5 L705.4 195.1 L709.1 194.7 L711.7 192.9 L713.4 189.9 L715.1 191.8 L715.7 196.1 L718.5 195.1 L720.5 193.5 L725 194.2 M725 194.2 L727.9 196.5 L728.7 199.3 L733.3 200.4 L735.9 205.2 L736.4 207.9 L737.8 210.7 L736 214.7 L740.1 217.2 L742.5 218.3 L745.5 218 L751.5 222.7 L756.6 225.6 L762.6 226 L764.6 225.3 L764.9 227.7 L767.4 224.8 L772.6 226.1 L774 227.2 L778.8 223.2 L783.1 222.1 L786.8 223.9 L788.9 224.7 M742.5 218.3 L739.8 222.9 L748.9 227.6 L756.1 230 L762.6 230.6 L762.6 226 M764.9 227.7 L765.2 229.2 L773.7 229.2 L774 227.2 M788.9 224.7 L785.6 227.9 L782.6 231.7 L781.1 234.5 L779.9 238.5 L777.5 238.3 L777.1 243.6 L775.4 244.5 L774.5 248.3 M762.6 230.6 L763.3 232.5 L764.9 234.4 L762.6 236.3 L764.4 238.1 L764.7 241.4 L765.3 244.3 M775.4 244.5 L774.5 241.2 L772 240.9 L771.4 239.1 L774.8 235 L767.6 234.1 L767.4 231.6 L763.4 230 M706 239.1 L707.7 237.2 L714 236.9 L711.1 230 L712.2 225.5 L719.4 222.1 L723.9 215.7 L724.2 212.3 L726.5 211.3 L722.5 208.3 L722.2 203.5 L733.3 200.4 M788.9 224.7 L792.7 226.9 L792.7 232.3 L789.5 235.8 L790 238.5 L793.3 240.6 L795 241.4 L794.2 243.9 L796.7 246 L799.7 245.7 L801.6 246.8 L801.4 242.8 L802.6 243.1 L807.7 242.8 L811.7 240.2 L815.5 241.7 L815.5 244.3 L819.2 245.7 M799.7 245.7 L796.7 249.4 L793.6 251 L790.2 254.8 L788.9 254.8 L792.5 262.2 L791.3 264.9 L794 269 L795.4 274.7 L793 278.8 M796.7 249.4 L798 251.9 L800 251.8 L799.3 256.9 L802.4 255.8 L806.1 255.2 L810 258.1 L810 260.9 L812.4 263.3 L812.1 266.5 L811.2 267.2 L805 267.5 L803.6 269.4 L804.7 274.8 M802.6 243.1 L804.7 245.6 L807.7 247.7 L810.5 250.4 L807.8 252.2 L811.2 254.6 L814.9 259.4 L817.8 263.9 L817.9 266.2 L817.5 273.1 L813.2 275.1 L814.1 277.6 L811 277.2 L809.1 278.8 M811.2 267.2 L817.9 266.2 M796.7 290.1 L799.6 292.4 L802.4 290.7 M823.9 302.7 L824.9 305.1 L830 305.7 L831.1 304.4 L835.4 304.9 L838.5 303 L839.4 300.4 L840.7 297.4 L846.2 296.7 M913.1 315.9 L913.1 334.5 M864.9 335.2 L867.8 334.2 L867.6 336.8 M761.7 147.3 L767.1 144.2 L774.8 140.2 L781.1 143.6 L788.8 144.9 L791.6 141.6 L790.5 135.7 L793.3 134.3 L802.7 137.7 L803 141.1 L810.7 142 L815.2 142.2 L820.6 146.9 L826.9 147.5 L833.7 145.5 L838.8 142.9 L843.9 144.4 M761.7 147.3 L762.3 150.1 L768.1 152.9 L770.6 159.6 L770.8 164.1 L778 165.1 L783.4 167.9 L786.2 173.7 L797.3 174.1 L801.6 174.9 L810.7 178.2 L817.5 175.1 L823.5 174.9 L830.4 170 L828.9 167.5 L830.3 164.7 L835.3 165.9 L841.8 161.8 L845.9 158.3 L853 157.9 L849.1 152.7 L847.1 152.5 L840.5 152.9 L841.4 151.4 L843.9 144.4 M843.9 144.4 L847.2 146 L851.3 143.3 L853.6 136.1 L855.3 132.2 L856.2 128.6 L863.6 127.5 L869.3 129.8 L874.7 144.7 L881.8 148.6 L884.3 153.7 L888.9 153.7 L895.3 151 L894.3 155 L890.7 164.3 L887 163.6 L884.6 165.5 L885.3 170.8 L883.6 175.1 M883.6 175.1 L881.5 172.8 L878.6 176.6 L876.2 176.6 L873 177.4 L870.4 180.8 L865.7 184.2 M870.7 192.4 L873.5 190.4 L877.1 189.3 M651.9 159.6 L650 157.9 L649.1 153.7 L646 152.9 L644.8 150.8 L645.7 147.3 L645.1 144.2 L646.8 142.2 L650.5 144.2 L650.8 141.3 L656.4 136.1 L661 137 L663.9 137.3 L667 139.8 L670.4 141.1 L672.7 139.3 L678.7 139.1 L682.4 140.4 L686.6 140.2 L687.2 138.2 L682.7 134.7 L685.5 130.3 L686.1 125.5 L691.5 124.8 L697.5 123.6 L706 120.6 L713.7 118.9 L714.2 123.8 L720.9 125.5 L729.9 124.8 L733.6 128.6 L739.7 140.2 L743.7 140.4 L749.2 139.3 L754.5 145.5 L758.9 144.9 L760.5 147.7 L761.7 147.3 M760.5 147.7 L755.9 150.8 L755.2 156.5 L748.1 155.8 L746.1 162.6 L740.6 164.7 L741.8 172.2 L740.1 176.4 L734.4 180.2 L730.6 180.4 L727.3 183 L721.9 184.7 L721.5 186.2 L722.5 189.7 L725 194.2 M740.1 176.4 L737 173.7 L727.5 173.4 L723.2 172 L721.1 174.9 L716.4 173.5 L713.8 175.7 L708.4 179.1 L705.6 180 L701.7 179.9 L701.2 176.6 L700 172.8 L696.7 170 L685.9 167.9 L678.7 162.6 L671.1 164.9 L671.2 179.3 L667.7 176.4 L661.2 177.6 M671.2 179.3 L674.1 179.3 L674.4 176.6 L678.7 173.5 L682.7 175.9 L683 178.9 L688.1 180 L689.5 184.2 L694.6 188 L701.2 193.8 M705.4 195.1 L706.6 190.8 L704.9 185.6 L709.1 183.4 L712.5 180.6 L713.8 175.7 M709.1 183.4 L712.8 185.6 L721.5 186.2"/>
<style>
.lc{font-family:"Liberation Sans",sans-serif;font-size:14px;fill:#c4601a;stroke:#f8f4ee;stroke-opacity:.8;stroke-width:2.4px;paint-order:stroke}
.lo{font-family:"Liberation Sans",sans-serif;font-size:13.4px;font-style:italic;fill:#2059a8;stroke:#ffffff;stroke-opacity:.9;stroke-width:2.8px;paint-order:stroke}
</style>
<text class="lc" x="204.6" y="175.2" textLength="53.9" lengthAdjust="spacing">North</text>
<text class="lc" x="192.4" y="189.9" textLength="79.3" lengthAdjust="spacing">America</text>
<text class="lc" x="546.7" y="148.4" textLength="69.6" lengthAdjust="spacing">Europe</text>
<text class="lc" x="786.8" y="193.7" textLength="40.3" lengthAdjust="spacing">Asia</text>
<text class="lc" x="539.2" y="268.3" textLength="57.1" lengthAdjust="spacing">Africa</text>
<text class="lc" x="328.3" y="336.8" textLength="57.5" lengthAdjust="spacing">South</text>
<text class="lc" x="317.0" y="350.9" textLength="80.0" lengthAdjust="spacing">America</text>
<text class="lc" x="852.0" y="391.8" textLength="91.9" lengthAdjust="spacing">Australia</text>
<text class="lo" x="70.5" y="179.5" textLength="71.2" lengthAdjust="spacing">North</text>
<text class="lo" x="59.7" y="193.7" textLength="93.0" lengthAdjust="spacing">Pacific</text>
<text class="lo" x="65.4" y="207.5" textLength="80.6" lengthAdjust="spacing">Ocean</text>
<text class="lo" x="371.4" y="190.0" textLength="71.8" lengthAdjust="spacing">North</text>
<text class="lo" x="355.4" y="204.0" textLength="104.8" lengthAdjust="spacing">Atlantic</text>
<text class="lo" x="367.3" y="217.8" textLength="80.7" lengthAdjust="spacing">Ocean</text>
<text class="lo" x="196.0" y="367.4" textLength="75.2" lengthAdjust="spacing">South</text>
<text class="lo" x="187.6" y="381.5" textLength="93.1" lengthAdjust="spacing">Pacific</text>
<text class="lo" x="193.2" y="395.3" textLength="81.5" lengthAdjust="spacing">Ocean</text>
<text class="lo" x="441.0" y="361.4" textLength="76.1" lengthAdjust="spacing">South</text>
<text class="lo" x="426.4" y="375.5" textLength="104.6" lengthAdjust="spacing">Atlantic</text>
<text class="lo" x="438.5" y="389.0" textLength="81.1" lengthAdjust="spacing">Ocean</text>
<text class="lo" x="682.0" y="336.2" textLength="83.7" lengthAdjust="spacing">Indian</text>
<text class="lo" x="683.3" y="349.8" textLength="81.4" lengthAdjust="spacing">Ocean</text>
<circle cx="525.6" cy="134.8" r="7.0" fill="#c2c2c2" stroke="#b9b9b9" stroke-width="1" fill-opacity="0.85"/>
<circle cx="175.4" cy="206.3" r="3.6" fill="#f03232" stroke="#b9b9b9" stroke-width="1" fill-opacity="1"/>
<circle cx="193.9" cy="208.8" r="9.6" fill="#2e912e" stroke="#b9b9b9" stroke-width="1" fill-opacity="1"/>
<circle cx="239.6" cy="180.5" r="6.4" fill="#2e912e" stroke="#b9b9b9" stroke-width="1" fill-opacity="1"/>
<circle cx="292.1" cy="189.0" r="10.8" fill="#2e912e" stroke="#b9b9b9" stroke-width="1" fill-opacity="1"/>
<circle cx="619.7" cy="117.4" r="6.4" fill="#2e912e" stroke="#b9b9b9" stroke-width="1" fill-opacity="1"/>
<circle cx="634.7" cy="169.4" r="6.4" fill="#2e912e" stroke="#b9b9b9" stroke-width="1" fill-opacity="1"/>
<circle cx="612.6" cy="213.5" r="6.4" fill="#2a2af0" stroke="#b9b9b9" stroke-width="1" fill-opacity="1"/>
<circle cx="808.3" cy="217.6" r="3.6" fill="#f03232" stroke="#b9b9b9" stroke-width="1" fill-opacity="1"/>
</svg><!--/MAPSVG-->
</div>
<!-- map toolbar -->
<div class="abs" style="left:455px;top:168px;width:24px;height:6px;background:#b9c1cd"></div>
<div class="abs" style="left:457px;top:176px;width:20px;height:72px;background:#fdfde2"></div>
<div class="abs" style="left:459px;top:204px;width:16px;height:18px;background:#fdfdfb"></div>
<svg class="abs" style="left:458px;top:179px" width="18" height="70" fill="none">
<path d="M2 10.5 L9 3.5 L16 10.5 M4.3 9.5 V16 H7.3 V11.5 H10.7 V16 H13.7 V9.5" stroke="#333" stroke-width="1.3"/>
<g stroke="#666" stroke-width="0.9"><circle cx="9" cy="36" r="2.3"/><path d="M9 30.3 l1.2 0 .5 1.5 1.3.7 1.5-.5 .9 1 -.8 1.4 0 1.4 1.2 1 -.5 1.2 -1.6 .1 -1 1 .1 1.6 -1.2 .5 -1-1.2 -1.4 0 -1 1.2 -1.2-.5 .1-1.6 -1-1 -1.6-.1 -.5-1.2 1.2-1 0-1.4 -.8-1.4 .9-1 1.5.5 1.3-.7 .5-1.5z"/></g>
<circle cx="6" cy="55" r="4.2" fill="#9cc3ec" stroke="#4a86c5" stroke-width="1.2"/><path d="M9 58.5 L15 64.5" stroke="#4a86c5" stroke-width="2"/>
<rect x="7" y="50.5" width="9" height="5" stroke="#222" stroke-width="1" stroke-dasharray="2.4 1.4"/>
</svg>
<!-- zoom buttons -->
<div class="box" style="left:1522px;top:171px;width:27px;height:27px;border-radius:2px;border-color:#d6d3d0"></div>
<div class="box" style="left:1522px;top:204px;width:27px;height:27px;border-radius:2px;border-color:#d6d3d0"></div>
<svg class="abs" style="left:1522px;top:171px" width="27" height="60"><path d="M8.5 13.5 H18.5 M13.5 8.5 V18.5" stroke="#8a8a8a" stroke-width="2"/><path d="M8.5 46.5 H18.5" stroke="#9a9a9a" stroke-width="2"/></svg>

<!-- legend -->
<div class="abs" style="left:450px;top:523px;width:98px;height:109px;background:rgba(232,232,232,0.82)"></div>
<div class="abs" style="left:449px;top:497px;width:99px;height:26px;background:#9a9a9a;border:1px solid #111;text-align:center;font-family:'Liberation Serif',serif;font-weight:bold;font-size:14px;line-height:24px;color:#111">Count</div>
<svg class="abs" style="left:450px;top:523px" width="98" height="109" font-family="Liberation Sans" font-size="12" fill="#444">
<g fill="#dcdcdc" stroke="#cbcbcb" stroke-width="1"><circle cx="12" cy="16" r="9.5"/><circle cx="12" cy="36" r="8"/><circle cx="12" cy="55.5" r="6.5"/><circle cx="12" cy="75" r="5"/><circle cx="12" cy="94" r="3.6"/></g>
<text x="27" y="19.6">19 - 38</text><text x="70.5" y="19.6">(2)</text><text x="27" y="39.6">10 - 18</text><text x="70.5" y="39.6">(0)</text><text x="27" y="58.6">5 - 9</text><text x="58" y="58.6">(5)</text><text x="27" y="78.6">3 - 4</text><text x="58" y="78.6">(0)</text><text x="27" y="97.6">1 - 2</text><text x="58" y="97.6">(2)</text>
</svg>

<!-- attribution -->
<div class="abs" style="left:1308px;top:627px;width:206px;height:14px;background:rgba(255,255,255,0.68)"></div>
<div class="abs" style="left:1308px;top:628px;font-size:10px;line-height:12px;color:#3c3c3c;white-space:nowrap">© 2023 Oracle Corporation&nbsp;&nbsp;&nbsp;&nbsp;<span style="color:#3a74b8;text-decoration:underline">Terms</span>&nbsp;&nbsp;&nbsp;&nbsp;Map data © HERE</div>

<div class="t12" style="left:444px;top:642px">Log Records: 111, Locations: 9</div>
<div class="hsep" style="left:434px;top:658px;width:1124px;background:#e6e4e1"></div>
<div class="t12" style="left:1350px;top:680px;width:159px;text-align:right">Showing 1 - 9 of 9</div>

<!-- table -->
<div class="abs" style="left:454px;top:696px;width:1055px;height:100px;border:1px solid #b9b4b0;border-bottom:none"></div>
<div class="abs" style="left:454px;top:735px;width:1055px;height:1px;background:#b9b4b0"></div>
<div class="abs" style="left:454px;top:774px;width:1055px;height:1px;background:#b9b4b0"></div>
<div class="abs" style="left:601px;top:696px;width:1px;height:39px;background:#b9b4b0"></div>
<div class="abs" style="left:773px;top:696px;width:1px;height:39px;background:#b9b4b0"></div>
<div class="abs" style="left:918px;top:696px;width:1px;height:39px;background:#b9b4b0"></div>
<div class="abs" style="left:1065px;top:696px;width:1px;height:39px;background:#b9b4b0"></div>
<div class="abs" style="left:1213px;top:696px;width:1px;height:39px;background:#b9b4b0"></div>
<div class="abs" style="left:1361px;top:696px;width:1px;height:39px;background:#b9b4b0"></div>
<div id="th" style="font-weight:bold;font-size:14px;color:#161513">
<div class="abs" style="left:465px;top:708px;line-height:18px">Action</div>
<div class="abs" style="left:612px;top:708px;line-height:18px">Client Coordinates</div>
<div class="abs" style="left:784px;top:708px;line-height:18px">City</div>
<div class="abs" style="left:930px;top:708px;line-height:18px">Region</div>
<div class="abs" style="left:1076px;top:708px;line-height:18px">Country</div>
<div class="abs" style="left:1224px;top:708px;line-height:18px">Continent</div>
<div class="abs" style="left:1372px;top:708px;line-height:18px">Count</div>
</div>
<svg class="abs" style="left:577px;top:713px" width="12" height="7"><polygon points="0.5,0 11.5,0 6,6" fill="#5a544f"/></svg>
<div id="tr" style="font-size:14px;color:#2c6c8f">
<div class="abs" style="left:465px;top:745px;line-height:18px">reject</div>
<div class="abs" style="left:607px;top:742px;width:90px;height:21px;background:#e3e3e3"></div>
<div class="abs" style="left:783px;top:745px;line-height:18px">chengdu</div>
<div class="abs" style="left:929px;top:745px;line-height:18px">cn-sc</div>
<div class="abs" style="left:1076px;top:745px;line-height:18px">china</div>
<div class="abs" style="left:1223px;top:745px;line-height:18px">asia</div>
<div class="abs" style="left:1372px;top:745px;line-height:18px;color:#161513">1</div>
</div>
<!-- side handle -->
<div class="abs" style="left:1550px;top:646px;width:20px;height:64px;border:2px solid #3a3a3a;border-radius:6px;background:#fdfdfb;box-shadow:-2px 0 6px rgba(0,0,0,0.12)"></div>
</div>
</body></html>
